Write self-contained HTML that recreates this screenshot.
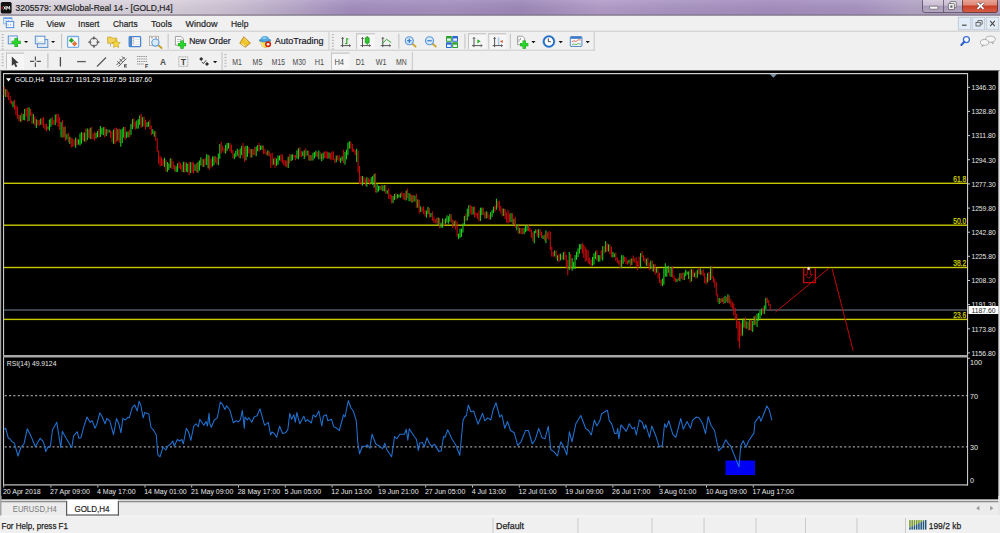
<!DOCTYPE html>
<html><head><meta charset="utf-8"><title>MT4</title>
<style>
html,body{margin:0;padding:0;width:1000px;height:533px;overflow:hidden;background:#f0f0f0;}
svg{display:block;font-family:"Liberation Sans",sans-serif;}
</style></head><body>
<svg width="1000" height="533" viewBox="0 0 1000 533">
<rect x="0" y="0" width="1000" height="533" fill="#f0f0f0"/>
<defs>
<linearGradient id="tb" x1="0" x2="1" y1="0" y2="0">
 <stop offset="0" stop-color="#dcd7e0"/>
 <stop offset="0.17" stop-color="#d9d1dd"/>
 <stop offset="0.23" stop-color="#cdc2d5"/>
 <stop offset="0.30" stop-color="#b6a4c8"/>
 <stop offset="0.35" stop-color="#a38dbf"/>
 <stop offset="0.45" stop-color="#a58fc0"/>
 <stop offset="0.52" stop-color="#9d87b9"/>
 <stop offset="0.60" stop-color="#b39cc9"/>
 <stop offset="0.67" stop-color="#aa94c4"/>
 <stop offset="0.77" stop-color="#a48dbf"/>
 <stop offset="0.86" stop-color="#a892c2"/>
 <stop offset="0.91" stop-color="#b3a3c6"/>
 <stop offset="1" stop-color="#ae9ec4"/>
</linearGradient>
<linearGradient id="tbv" x1="0" x2="0" y1="0" y2="1">
 <stop offset="0" stop-color="#ffffff" stop-opacity="0.10"/>
 <stop offset="1" stop-color="#000000" stop-opacity="0.04"/>
</linearGradient>
<linearGradient id="closeg" x1="0" x2="0" y1="0" y2="1">
 <stop offset="0" stop-color="#eab0a4"/>
 <stop offset="0.45" stop-color="#e08a78"/>
 <stop offset="0.58" stop-color="#c94028"/>
 <stop offset="1" stop-color="#d8604a"/>
</linearGradient>
<linearGradient id="capg" x1="0" x2="0" y1="0" y2="1">
 <stop offset="0" stop-color="#ddd3e2"/>
 <stop offset="0.5" stop-color="#c9bdd3"/>
 <stop offset="0.55" stop-color="#a99bb8"/>
 <stop offset="1" stop-color="#b5a8c3"/>
</linearGradient>
</defs>
<rect x="0" y="0" width="1000" height="15.5" fill="url(#tb)"/>
<rect x="0" y="0" width="1000" height="15.5" fill="url(#tbv)"/>
<rect x="0" y="14.5" width="1000" height="1.3" fill="#79717f"/>
<rect x="0.8" y="2" width="10.8" height="11.6" rx="1.6" fill="#121212"/>
<path d="M1.6 6.2 L3.4 7.8 L1.6 9.4 Z" fill="#d02020"/>
<path d="M3.6 6.2 L6 9.6 M6 6.2 L3.6 9.6 M6.6 9.7 L6.9 6.2 L8.2 8.6 L9.5 6.2 L9.8 9.7" fill="none" stroke="#f4f4f4" stroke-width="0.9"/>
<text x="15.6" y="10.9" font-size="9.6" fill="#1e1e1e" text-anchor="start" font-weight="normal" textLength="157" lengthAdjust="spacingAndGlyphs" stroke="#1e1e1e" stroke-width="0.2">3205579: XMGlobal-Real 14 - [GOLD,H4]</text>
<rect x="922.5" y="-2" width="75" height="14.5" rx="2.5" fill="url(#capg)" stroke="#5e5668" stroke-width="0.9"/>
<rect x="962.5" y="-2" width="35" height="14.5" rx="2.5" fill="url(#closeg)" stroke="#6a3a34" stroke-width="0.9"/>
<line x1="943.5" y1="0" x2="943.5" y2="12.5" stroke="#5e5668" stroke-width="0.8"/>
<rect x="929.6" y="6.2" width="8.2" height="3" rx="0.5" fill="#f8f8f8" stroke="#505050" stroke-width="0.6"/>
<rect x="950.2" y="1.6" width="6" height="6" rx="0.6" fill="#f4f4f4" stroke="#505050" stroke-width="0.7"/>
<rect x="948.4" y="3.6" width="6" height="6" rx="0.6" fill="#f4f4f4" stroke="#505050" stroke-width="0.7"/>
<rect x="950.3" y="5.5" width="2.2" height="2.2" fill="#606070"/>
<path d="M977.5 2.8 L983.5 8.8 M983.5 2.8 L977.5 8.8" stroke="#5a4040" stroke-width="3.0"/>
<path d="M977.5 2.8 L983.5 8.8 M983.5 2.8 L977.5 8.8" stroke="#ffffff" stroke-width="1.8"/>
<rect x="0" y="15.8" width="1000" height="15.2" fill="#f0f0f0"/>
<rect x="0" y="30.5" width="1000" height="1" fill="#d9d9d9"/>
<rect x="3.6" y="17.8" width="8.4" height="6" fill="#e4eefa" stroke="#8ab4e8" stroke-width="0.9"/>
<rect x="3.6" y="17.6" width="8.4" height="1.3" fill="#5a94e4"/>
<path d="M5.5 20.5 l1.5 1 M8 20 l1.2 1.2" stroke="#5a90d8" stroke-width="0.6"/>
<rect x="6.3" y="21.6" width="7.4" height="6" fill="#ffffff" stroke="#5a94e4" stroke-width="1.1"/>
<path d="M8 23.5 v2.5 M8 25 h1.2 M10.5 23.5 v2.5 M10.5 25 h1.2" stroke="#8ab0e0" stroke-width="0.6"/>
<text x="20.6" y="26.5" font-size="9.7" fill="#1e1e1e" text-anchor="start" font-weight="normal" textLength="13.4" lengthAdjust="spacingAndGlyphs" stroke="#1e1e1e" stroke-width="0.2">File</text>
<text x="46.4" y="26.5" font-size="9.7" fill="#1e1e1e" text-anchor="start" font-weight="normal" textLength="18.6" lengthAdjust="spacingAndGlyphs" stroke="#1e1e1e" stroke-width="0.2">View</text>
<text x="78" y="26.5" font-size="9.7" fill="#1e1e1e" text-anchor="start" font-weight="normal" textLength="21.4" lengthAdjust="spacingAndGlyphs" stroke="#1e1e1e" stroke-width="0.2">Insert</text>
<text x="113" y="26.5" font-size="9.7" fill="#1e1e1e" text-anchor="start" font-weight="normal" textLength="24.6" lengthAdjust="spacingAndGlyphs" stroke="#1e1e1e" stroke-width="0.2">Charts</text>
<text x="151" y="26.5" font-size="9.7" fill="#1e1e1e" text-anchor="start" font-weight="normal" textLength="21" lengthAdjust="spacingAndGlyphs" stroke="#1e1e1e" stroke-width="0.2">Tools</text>
<text x="185.6" y="26.5" font-size="9.7" fill="#1e1e1e" text-anchor="start" font-weight="normal" textLength="32.0" lengthAdjust="spacingAndGlyphs" stroke="#1e1e1e" stroke-width="0.2">Window</text>
<text x="231" y="26.5" font-size="9.7" fill="#1e1e1e" text-anchor="start" font-weight="normal" textLength="17.4" lengthAdjust="spacingAndGlyphs" stroke="#1e1e1e" stroke-width="0.2">Help</text>
<rect x="958.3" y="17.2" width="12.5" height="12.6" fill="#e2ecf7" stroke="#b4c4d4" stroke-width="0.8"/>
<rect x="972.2" y="17.2" width="12.5" height="12.6" fill="#e2ecf7" stroke="#b4c4d4" stroke-width="0.8"/>
<rect x="986.2" y="17.2" width="12.5" height="12.6" fill="#e2ecf7" stroke="#b4c4d4" stroke-width="0.8"/>
<rect x="962" y="24.6" width="4.6" height="1.2" fill="#4a4a4a"/>
<path d="M977.8 22.2 v-1.6 h4.4 v3.6 h-1.4" fill="none" stroke="#505050" stroke-width="0.8"/><rect x="976" y="22.4" width="4.2" height="3.6" fill="#e2ecf7" stroke="#505050" stroke-width="0.8"/>
<path d="M990.2 20.8 L994.8 26.2 M994.8 20.8 L990.2 26.2" stroke="#4a4a4a" stroke-width="1.1"/>
<rect x="0" y="31" width="1000" height="1" fill="#d6d6d6"/>
<rect x="0" y="32" width="1000" height="18" fill="#f0f0f0"/>
<rect x="0" y="49.7" width="595" height="1.1" fill="#d0d0d0"/>
<rect x="593.6" y="32" width="1.2" height="18" fill="#d0d0d0"/>
<rect x="328.4" y="32" width="1.1" height="18" fill="#d0d0d0"/>
<rect x="0" y="51.6" width="1000" height="18.4" fill="#f0f0f0"/>
<rect x="411.8" y="52" width="1.1" height="18" fill="#c8c8c8"/>
<rect x="1.6" y="34.0" width="2" height="1.1" fill="#b4b4b4"/>
<rect x="1.6" y="36.9" width="2" height="1.1" fill="#b4b4b4"/>
<rect x="1.6" y="39.8" width="2" height="1.1" fill="#b4b4b4"/>
<rect x="1.6" y="42.7" width="2" height="1.1" fill="#b4b4b4"/>
<rect x="1.6" y="45.6" width="2" height="1.1" fill="#b4b4b4"/>
<rect x="1.6" y="48.5" width="2" height="1.1" fill="#b4b4b4"/>
<rect x="8.3" y="36" width="9" height="7.8" fill="#f6f9fd" stroke="#5b8fd0" stroke-width="1"/>
<path d="M10 37.5 v4.5 h5 M10.5 39.5 l1 -0.8" fill="none" stroke="#9ab0c8" stroke-width="0.5"/>
<path d="M11.7 42.4 h9.0 M16.2 37.9 v9.0" stroke="#139a13" stroke-width="3.4000000000000004"/>
<path d="M12.1 42.4 h8.2 M16.2 38.3 v8.2" stroke="#2ad42a" stroke-width="2.6"/>
<path d="M24 40.9 L28.2 40.9 L26.1 43.1 Z" fill="#101010"/>
<rect x="37.4" y="39.6" width="10.4" height="7.8" fill="#e8eef6" stroke="#5b8fd0" stroke-width="1"/>
<rect x="35.3" y="36.2" width="9.6" height="7.6" fill="#f6f9fd" stroke="#5b8fd0" stroke-width="1"/>
<path d="M37 37.6 v4.6 h6" fill="none" stroke="#9ab0c8" stroke-width="0.5"/>
<path d="M51 40.9 L55.2 40.9 L53.1 43.1 Z" fill="#101010"/>
<rect x="61" y="33.7" width="1.1" height="15.0" fill="#c4c4c4"/>
<rect x="67.6" y="36.5" width="11" height="10.8" rx="0.8" fill="#fbfbfb" stroke="#78aee8" stroke-width="1.3"/>
<path d="M71.4 37.8 l2.6 2.6 l-2.6 2.6 l-2.6 -2.6 Z" fill="#22a822"/>
<path d="M74.6 41 l2.7 2.7 l-2.7 2.7 l-2.7 -2.7 Z" fill="#e8703a"/>
<circle cx="93.9" cy="42.1" r="3.9" fill="none" stroke="#6a6a6a" stroke-width="1.2"/>
<path d="M88.3 42.1 h3 M96.5 42.1 h3 M93.9 36.5 v3 M93.9 44.7 v3" stroke="#555555" stroke-width="1.3"/>
<path d="M107.6 37 h3.6 l1 1.1 h4.6 v5.2 h-9.2 Z" fill="#f3d25a" stroke="#c8a030" stroke-width="0.7"/>
<rect x="110.1" y="43.6" width="0.9" height="3" fill="#a8a8a8"/>
<path d="M116.1 39.6 l1.25 2.7 2.9 0.35 -2.15 2 0.6 2.9 -2.6 -1.45 -2.6 1.45 0.6 -2.9 -2.15 -2 2.9 -0.35 Z" fill="#f6d840" stroke="#c09a18" stroke-width="0.6"/>
<rect x="129.2" y="36.6" width="11.4" height="10" rx="0.8" fill="#ffffff" stroke="#4a86cf" stroke-width="1.3"/>
<rect x="129.4" y="36.8" width="2.6" height="9.6" fill="#4a86cf"/>
<path d="M132.5 39.5 h7.5 M132.5 42 h7.5 M132.5 44.5 h7.5" stroke="#c8d4e4" stroke-width="0.6"/>
<path d="M132.6 38.2 h1.2 M132.6 43 h1.2" stroke="#e05050" stroke-width="0.9"/><path d="M132.6 40.7 h1.2" stroke="#40a040" stroke-width="0.9"/>
<rect x="149.5" y="36.3" width="9" height="9.2" fill="#fafafa" stroke="#a8a49a" stroke-width="0.8"/>
<path d="M151 37.8 h2 M155 37.8 h2" stroke="#505050" stroke-width="0.6"/>
<path d="M158 45 l3.6 3" stroke="#c89a28" stroke-width="1.9" stroke-linecap="round"/>
<circle cx="155.4" cy="42.6" r="3.6" fill="#d8eaf8" stroke="#5a98d8" stroke-width="1.1"/>
<rect x="167.6" y="33.7" width="1.1" height="15.0" fill="#c4c4c4"/>
<path d="M175.4 36.4 h5.6 l2.3 2.3 v6.5 h-7.9 Z" fill="#fbfbfb" stroke="#8a8a8a" stroke-width="0.8"/>
<path d="M177 39.5 h4.5 M177 41.5 h4" stroke="#a0a0a0" stroke-width="0.6"/>
<path d="M177.9 44.6 h8.2 M182 40.5 v8.2" stroke="#139a13" stroke-width="3.3"/>
<path d="M178.3 44.6 h7.3999999999999995 M182 40.9 v7.3999999999999995" stroke="#2ad42a" stroke-width="2.5"/>
<text x="189.2" y="43.8" font-size="9.8" fill="#1a1a2a" text-anchor="start" font-weight="normal" textLength="41.3" lengthAdjust="spacingAndGlyphs" stroke="#1a1a2a" stroke-width="0.2">New Order</text>
<path d="M243.65 36.2 L251 42.9 L245.25 47.7 L239.2 43.2 Z" fill="#c09030"/>
<path d="M243.9 37.6 L249.6 42.9 L245.3 46.5 L240.5 43 Z" fill="#f0c62a"/>
<path d="M241.3 43.4 L245.3 46.3" stroke="#f8e6a0" stroke-width="1.1"/>
<path d="M244.2 38.6 L247.6 41.6" stroke="#f8e070" stroke-width="1"/>
<path d="M259.6 40.6 L270.6 40.6 L269.6 45.8 L265.2 47.9 L262.2 46.3 Z" fill="#f4dc4c" stroke="#c8a838" stroke-width="0.5"/>
<path d="M260.6 41.5 L263.5 46.5" stroke="#fbf0a0" stroke-width="1"/>
<ellipse cx="265" cy="40.3" rx="6.1" ry="1.9" fill="#3f94d0"/>
<ellipse cx="264.9" cy="38.4" rx="4" ry="2.5" fill="#58ace2"/>
<ellipse cx="264.4" cy="37.9" rx="2" ry="1" fill="#8cccf0"/>
<circle cx="268.1" cy="44.2" r="3" fill="#d42414"/><circle cx="268.1" cy="44.2" r="1.3" fill="#ffffff"/>
<text x="274.7" y="43.8" font-size="9.8" fill="#1a1a2a" text-anchor="start" font-weight="normal" textLength="48.8" lengthAdjust="spacingAndGlyphs" stroke="#1a1a2a" stroke-width="0.2">AutoTrading</text>
<rect x="331.8" y="34.0" width="2" height="1.1" fill="#b4b4b4"/>
<rect x="331.8" y="36.9" width="2" height="1.1" fill="#b4b4b4"/>
<rect x="331.8" y="39.8" width="2" height="1.1" fill="#b4b4b4"/>
<rect x="331.8" y="42.7" width="2" height="1.1" fill="#b4b4b4"/>
<rect x="331.8" y="45.6" width="2" height="1.1" fill="#b4b4b4"/>
<rect x="331.8" y="48.5" width="2" height="1.1" fill="#b4b4b4"/>
<path d="M342.6 37.4 V47.1 M340.6 45.6 H350.5" stroke="#555555" stroke-width="1"/>
<path d="M341.40000000000003 38.9 L342.6 37.4 L343.8 38.9 M349.0 44.4 L350.5 45.6 L349.0 46.800000000000004" fill="none" stroke="#555555" stroke-width="0.8"/>
<path d="M346.8 38 v6.2 M346.8 39 h1.6 M346.8 43.5 h-1.6" stroke="#22a822" stroke-width="1.1"/>
<rect x="356.1" y="33.3" width="18.799999999999955" height="15.700000000000003" fill="#f6f6f6"/>
<rect x="356.1" y="33.3" width="18.799999999999955" height="1" fill="#b8b8b8"/>
<rect x="356.1" y="33.3" width="1" height="15.700000000000003" fill="#c4c4c4"/>
<path d="M362.5 37.4 V47.1 M360.5 45.6 H370.6" stroke="#555555" stroke-width="1"/>
<path d="M361.3 38.9 L362.5 37.4 L363.7 38.9 M369.1 44.4 L370.6 45.6 L369.1 46.800000000000004" fill="none" stroke="#555555" stroke-width="0.8"/>
<path d="M367.2 36 v9" stroke="#148814" stroke-width="0.8"/>
<rect x="365.2" y="37.4" width="4" height="5.8" rx="0.8" fill="#2ac82a" stroke="#148814" stroke-width="0.6"/>
<path d="M382.8 37.4 V47.1 M380.8 45.6 H390.8" stroke="#555555" stroke-width="1"/>
<path d="M381.6 38.9 L382.8 37.4 L384.0 38.9 M389.3 44.4 L390.8 45.6 L389.3 46.800000000000004" fill="none" stroke="#555555" stroke-width="0.8"/>
<path d="M382.2 43.6 L386.6 39.3 L391.2 42.6" fill="none" stroke="#32a832" stroke-width="1"/>
<rect x="398.3" y="33.7" width="1.1" height="15.0" fill="#c4c4c4"/>
<path d="M412.1 43.6 l3.4 3" stroke="#d0a838" stroke-width="2" stroke-linecap="round"/>
<circle cx="409.3" cy="40.75" r="4" fill="#d4e8fa" stroke="#5a98dc" stroke-width="1.2"/>
<path d="M407.1 40.75 h4.4" stroke="#3a78c8" stroke-width="1.2"/>
<path d="M409.3 38.55 v4.4" stroke="#3a78c8" stroke-width="1.2"/>
<path d="M432.3 43.6 l3.4 3" stroke="#d0a838" stroke-width="2" stroke-linecap="round"/>
<circle cx="429.5" cy="40.75" r="4" fill="#d4e8fa" stroke="#5a98dc" stroke-width="1.2"/>
<path d="M427.3 40.75 h4.4" stroke="#3a78c8" stroke-width="1.2"/>
<rect x="446" y="36" width="5.8" height="5.8" rx="0.4" fill="#2ca02c"/>
<rect x="447" y="38.4" width="3.8" height="2.4" fill="#e8f0f8"/>
<rect x="452.2" y="36" width="5.8" height="5.8" rx="0.4" fill="#2a68d0"/>
<rect x="453.2" y="38.4" width="3.8" height="2.4" fill="#e8f0f8"/>
<rect x="446" y="42.2" width="5.8" height="5.8" rx="0.4" fill="#2a68d0"/>
<rect x="447" y="44.6" width="3.8" height="2.4" fill="#e8f0f8"/>
<rect x="452.2" y="42.2" width="5.8" height="5.8" rx="0.4" fill="#2ca02c"/>
<rect x="453.2" y="44.6" width="3.8" height="2.4" fill="#e8f0f8"/>
<rect x="464.4" y="33.7" width="1.1" height="15.0" fill="#c4c4c4"/>
<rect x="468" y="33.3" width="18" height="15.700000000000003" fill="#f6f6f6"/>
<rect x="468" y="33.3" width="18" height="1" fill="#b8b8b8"/>
<rect x="468" y="33.3" width="1" height="15.700000000000003" fill="#c4c4c4"/>
<path d="M474 37.4 V47.1 M472 45.6 H482.2" stroke="#555555" stroke-width="1"/>
<path d="M472.8 38.9 L474 37.4 L475.2 38.9 M480.7 44.4 L482.2 45.6 L480.7 46.800000000000004" fill="none" stroke="#555555" stroke-width="0.8"/>
<path d="M477.4 39.2 L480.6 41.3 L477.4 43.4 Z" fill="#2ab02a"/>
<rect x="488.3" y="33.3" width="18.0" height="15.700000000000003" fill="#f6f6f6"/>
<rect x="488.3" y="33.3" width="18.0" height="1" fill="#b8b8b8"/>
<rect x="488.3" y="33.3" width="1" height="15.700000000000003" fill="#c4c4c4"/>
<path d="M494.6 37.4 V47.1 M492.6 45.6 H502.6" stroke="#555555" stroke-width="1"/>
<path d="M493.40000000000003 38.9 L494.6 37.4 L495.8 38.9 M501.1 44.4 L502.6 45.6 L501.1 46.800000000000004" fill="none" stroke="#555555" stroke-width="0.8"/>
<rect x="497.8" y="37.4" width="1.6" height="7.6" fill="#a8cce8"/>
<path d="M499.8 41.4 L502.8 39.9 L502.8 42.9 Z" fill="#e0602a"/>
<rect x="509.8" y="33.7" width="1.1" height="15.0" fill="#c4c4c4"/>
<path d="M517.6 36.2 h5 l2 2 v6.5 h-7 Z" fill="#fbfbfb" stroke="#8a8a8a" stroke-width="0.8"/>
<path d="M519 39 v3 M520.5 38 v2" stroke="#707070" stroke-width="0.6"/>
<path d="M520.1 44.6 h8.2 M524.2 40.5 v8.2" stroke="#139a13" stroke-width="3.3"/>
<path d="M520.5 44.6 h7.3999999999999995 M524.2 40.9 v7.3999999999999995" stroke="#2ad42a" stroke-width="2.5"/>
<path d="M531.3 41 L535.5 41 L533.4 43.2 Z" fill="#101010"/>
<circle cx="548.9" cy="41.5" r="5.2" fill="#ffffff" stroke="#1f6ac0" stroke-width="1.8"/>
<circle cx="548.9" cy="41.5" r="6.1" fill="none" stroke="#4a90d8" stroke-width="0.5"/>
<path d="M548.3 38.3 v3.4 h2.6" fill="none" stroke="#202020" stroke-width="0.8"/>
<path d="M558.6 41 L562.8000000000001 41 L560.7 43.2 Z" fill="#101010"/>
<rect x="570.3" y="36.6" width="11.6" height="9.8" rx="0.6" fill="#ffffff" stroke="#4a80c8" stroke-width="1"/>
<rect x="570.8" y="37" width="10.6" height="1.8" fill="#3a78c8"/>
<path d="M571.8 41.6 l2.2 -0.8 l2 0.6 l2.3 -1.6 l2.5 0.3" fill="none" stroke="#c8502a" stroke-width="0.8"/>
<rect x="570.8" y="42.6" width="10.6" height="0.6" fill="#c8d8ea"/>
<path d="M571.8 45 l2.2 -1 l2 0.8 l2.3 -1.3 l2.5 0.9" fill="none" stroke="#40a840" stroke-width="0.8"/>
<path d="M585.6 41 L589.8000000000001 41 L587.7 43.2 Z" fill="#101010"/>
<circle cx="966.4" cy="39.6" r="3.0" fill="#ffffff" stroke="#3a6fd8" stroke-width="1.3"/>
<path d="M964.3 41.8 l-3 3.2" stroke="#2a5fc8" stroke-width="2" stroke-linecap="round"/>
<ellipse cx="990.4" cy="39.2" rx="5" ry="3.1" fill="#f6f6f8" stroke="#a0a0a0" stroke-width="0.8"/>
<path d="M991.5 41.8 l1.5 2.2 l0 -2.4" fill="#f6f6f8" stroke="#808080" stroke-width="0.6"/>
<ellipse cx="984.5" cy="42.4" rx="4.2" ry="2.9" fill="#f6f6f8" stroke="#a0a0a0" stroke-width="0.8"/>
<path d="M982.5 45 l-0.6 1.6 l1.8 -1.4" fill="#f6f6f8" stroke="#808080" stroke-width="0.6"/>
<rect x="1.6" y="53.5" width="2" height="1.1" fill="#b4b4b4"/>
<rect x="1.6" y="56.4" width="2" height="1.1" fill="#b4b4b4"/>
<rect x="1.6" y="59.3" width="2" height="1.1" fill="#b4b4b4"/>
<rect x="1.6" y="62.2" width="2" height="1.1" fill="#b4b4b4"/>
<rect x="1.6" y="65.1" width="2" height="1.1" fill="#b4b4b4"/>
<rect x="6" y="52.6" width="18" height="16.15" fill="#f6f6f6"/>
<rect x="6" y="52.6" width="18" height="1" fill="#b8b8b8"/>
<rect x="6" y="52.6" width="1" height="16.15" fill="#c4c4c4"/>
<path d="M11.8 56.4 L11.8 66 L14 64 L15.6 67.3 L17.3 66.5 L15.7 63.3 L18.6 63 Z" fill="#3c3c3c"/>
<path d="M30 61.4 h4.2 M36.6 61.4 h4.3 M35.4 56.4 v4 M35.4 62.5 v4.4" stroke="#505050" stroke-width="1.2"/>
<rect x="47.2" y="53.4" width="1.4" height="15" fill="#c8c8c8"/>
<path d="M60.4 57.1 v9.4" stroke="#4a4a4a" stroke-width="1.3"/>
<path d="M77.1 61.6 h8.7" stroke="#5a5a5a" stroke-width="1.3"/>
<path d="M97 66.5 L106 57.5" stroke="#505050" stroke-width="1.1"/>
<path d="M116.5 65 L124.5 57 M118.3 66.6 L126.3 58.6 M117.3 61.2 l3 3 M119.5 58.8 l3 3 M122 56.4 l3 3" stroke="#4a4a4a" stroke-width="0.9"/>
<path d="M124.3 64.6 h2.6 M124.3 65.8 h2.2 M124.3 67 h2.6 M124.5 64.6 v2.6" stroke="#303030" stroke-width="0.7"/>
<path d="M137 56.5 h10" stroke="#7a7a7a" stroke-width="0.8" stroke-dasharray="1.2 0.6"/>
<path d="M137 59 h10" stroke="#7a7a7a" stroke-width="0.8" stroke-dasharray="1.2 0.6"/>
<path d="M137 61.5 h10" stroke="#7a7a7a" stroke-width="0.8" stroke-dasharray="1.2 0.6"/>
<path d="M137 64 h7" stroke="#7a7a7a" stroke-width="0.8" stroke-dasharray="1.2 0.6"/>
<text x="145" y="68" font-size="5.4" fill="#303030" text-anchor="start" font-weight="bold" >F</text>
<text x="160" y="65.2" font-size="9" fill="#4e4e4e" text-anchor="start" font-weight="bold" textLength="6" lengthAdjust="spacingAndGlyphs" >A</text>
<rect x="178.8" y="56.8" width="9" height="9.5" fill="none" stroke="#808080" stroke-width="0.7" stroke-dasharray="0.9 0.7"/>
<text x="180.8" y="65" font-size="8.2" fill="#404040" text-anchor="start" font-weight="bold" textLength="5.2" lengthAdjust="spacingAndGlyphs" >T</text>
<path d="M199.2 59 l2 -2 l2 2 l-2 2 Z M205 64 l2 -2 l2 2 l-2 2 Z" fill="#303030"/>
<path d="M201.8 61.8 l1.6 1.8 l2.6 -3.3" fill="none" stroke="#404040" stroke-width="1"/>
<path d="M213 61 L217.2 61 L215.1 63.2 Z" fill="#101010"/>
<rect x="221.5" y="52" width="1.1" height="18" fill="#c4c4c4"/>
<rect x="224.5" y="54.0" width="2" height="1.1" fill="#b4b4b4"/>
<rect x="224.5" y="56.9" width="2" height="1.1" fill="#b4b4b4"/>
<rect x="224.5" y="59.8" width="2" height="1.1" fill="#b4b4b4"/>
<rect x="224.5" y="62.7" width="2" height="1.1" fill="#b4b4b4"/>
<rect x="224.5" y="65.6" width="2" height="1.1" fill="#b4b4b4"/>
<text x="232.2" y="64.7" font-size="8.3" fill="#4a4a4a" text-anchor="start" font-weight="normal" textLength="9.7" lengthAdjust="spacingAndGlyphs" >M1</text>
<text x="252.6" y="64.7" font-size="8.3" fill="#4a4a4a" text-anchor="start" font-weight="normal" textLength="9.7" lengthAdjust="spacingAndGlyphs" >M5</text>
<text x="271.8" y="64.7" font-size="8.3" fill="#4a4a4a" text-anchor="start" font-weight="normal" textLength="13.1" lengthAdjust="spacingAndGlyphs" >M15</text>
<text x="292.5" y="64.7" font-size="8.3" fill="#4a4a4a" text-anchor="start" font-weight="normal" textLength="13.3" lengthAdjust="spacingAndGlyphs" >M30</text>
<text x="314.7" y="64.7" font-size="8.3" fill="#4a4a4a" text-anchor="start" font-weight="normal" textLength="9.3" lengthAdjust="spacingAndGlyphs" >H1</text>
<rect x="331" y="52.6" width="18.399999999999977" height="16.6" fill="#f6f6f6"/>
<rect x="331" y="52.6" width="18.399999999999977" height="1" fill="#b8b8b8"/>
<rect x="331" y="52.6" width="1" height="16.6" fill="#c4c4c4"/>
<text x="334.4" y="64.7" font-size="8.3" fill="#4a4a4a" text-anchor="start" font-weight="normal" textLength="9.6" lengthAdjust="spacingAndGlyphs" >H4</text>
<text x="355.8" y="64.7" font-size="8.3" fill="#4a4a4a" text-anchor="start" font-weight="normal" textLength="8.9" lengthAdjust="spacingAndGlyphs" >D1</text>
<text x="375.8" y="64.7" font-size="8.3" fill="#4a4a4a" text-anchor="start" font-weight="normal" textLength="10.8" lengthAdjust="spacingAndGlyphs" >W1</text>
<text x="395.9" y="64.7" font-size="8.3" fill="#4a4a4a" text-anchor="start" font-weight="normal" textLength="10.8" lengthAdjust="spacingAndGlyphs" >MN</text>
<rect x="0" y="70" width="1000" height="1.6" fill="#6a6a6a"/>
<rect x="0" y="71" width="998.6" height="428.7" fill="#000000"/>
<rect x="0" y="70.5" width="1.2" height="430" fill="#a0a0a0"/>
<rect x="998.6" y="70.5" width="1.4" height="430" fill="#dcdcdc"/>
<rect x="3" y="73" width="965" height="1.2" fill="#d0d0d0"/>
<rect x="3" y="73" width="1.1" height="412.5" fill="#c8c8c8"/>
<rect x="967" y="73" width="1.1" height="412.5" fill="#c8c8c8"/>
<rect x="3" y="355" width="965" height="2.5" fill="#a8a8a8"/>
<rect x="3" y="484.3" width="965" height="1.2" fill="#c8c8c8"/>
<rect x="968" y="86.8" width="2" height="1" fill="#c8c8c8"/>
<text x="971.4" y="90.1" font-size="7.2" fill="#e8e8e8" text-anchor="start" font-weight="normal" textLength="24.3" lengthAdjust="spacingAndGlyphs" >1346.30</text>
<rect x="968" y="110.9" width="2" height="1" fill="#c8c8c8"/>
<text x="971.4" y="114.2" font-size="7.2" fill="#e8e8e8" text-anchor="start" font-weight="normal" textLength="24.3" lengthAdjust="spacingAndGlyphs" >1328.80</text>
<rect x="968" y="135.1" width="2" height="1" fill="#c8c8c8"/>
<text x="971.4" y="138.4" font-size="7.2" fill="#e8e8e8" text-anchor="start" font-weight="normal" textLength="24.3" lengthAdjust="spacingAndGlyphs" >1311.80</text>
<rect x="968" y="159.2" width="2" height="1" fill="#c8c8c8"/>
<text x="971.4" y="162.6" font-size="7.2" fill="#e8e8e8" text-anchor="start" font-weight="normal" textLength="24.3" lengthAdjust="spacingAndGlyphs" >1294.30</text>
<rect x="968" y="183.4" width="2" height="1" fill="#c8c8c8"/>
<text x="971.4" y="186.7" font-size="7.2" fill="#e8e8e8" text-anchor="start" font-weight="normal" textLength="24.3" lengthAdjust="spacingAndGlyphs" >1277.30</text>
<rect x="968" y="207.6" width="2" height="1" fill="#c8c8c8"/>
<text x="971.4" y="210.9" font-size="7.2" fill="#e8e8e8" text-anchor="start" font-weight="normal" textLength="24.3" lengthAdjust="spacingAndGlyphs" >1259.80</text>
<rect x="968" y="231.7" width="2" height="1" fill="#c8c8c8"/>
<text x="971.4" y="235.0" font-size="7.2" fill="#e8e8e8" text-anchor="start" font-weight="normal" textLength="24.3" lengthAdjust="spacingAndGlyphs" >1242.80</text>
<rect x="968" y="255.8" width="2" height="1" fill="#c8c8c8"/>
<text x="971.4" y="259.1" font-size="7.2" fill="#e8e8e8" text-anchor="start" font-weight="normal" textLength="24.3" lengthAdjust="spacingAndGlyphs" >1225.80</text>
<rect x="968" y="280.0" width="2" height="1" fill="#c8c8c8"/>
<text x="971.4" y="283.3" font-size="7.2" fill="#e8e8e8" text-anchor="start" font-weight="normal" textLength="24.3" lengthAdjust="spacingAndGlyphs" >1208.30</text>
<rect x="968" y="304.1" width="2" height="1" fill="#c8c8c8"/>
<text x="971.4" y="307.4" font-size="7.2" fill="#e8e8e8" text-anchor="start" font-weight="normal" textLength="24.3" lengthAdjust="spacingAndGlyphs" >1191.30</text>
<rect x="968" y="328.3" width="2" height="1" fill="#c8c8c8"/>
<text x="971.4" y="331.6" font-size="7.2" fill="#e8e8e8" text-anchor="start" font-weight="normal" textLength="24.3" lengthAdjust="spacingAndGlyphs" >1173.80</text>
<rect x="968" y="352.4" width="2" height="1" fill="#c8c8c8"/>
<text x="971.4" y="355.8" font-size="7.2" fill="#e8e8e8" text-anchor="start" font-weight="normal" textLength="24.3" lengthAdjust="spacingAndGlyphs" >1156.80</text>
<rect x="4" y="182.6" width="963" height="1.4" fill="#c8c800"/>
<text x="966.2" y="181.8" font-size="8.2" fill="#d8d800" text-anchor="end" font-weight="normal" textLength="13" lengthAdjust="spacingAndGlyphs" stroke="#c8c800" stroke-width="0.25">61.8</text>
<rect x="4" y="224.5" width="963" height="1.4" fill="#c8c800"/>
<text x="966.2" y="223.7" font-size="8.2" fill="#d8d800" text-anchor="end" font-weight="normal" textLength="13" lengthAdjust="spacingAndGlyphs" stroke="#c8c800" stroke-width="0.25">50.0</text>
<rect x="4" y="266.8" width="963" height="1.4" fill="#c8c800"/>
<text x="966.2" y="266.0" font-size="8.2" fill="#d8d800" text-anchor="end" font-weight="normal" textLength="13" lengthAdjust="spacingAndGlyphs" stroke="#c8c800" stroke-width="0.25">38.2</text>
<rect x="4" y="318.7" width="963" height="1.4" fill="#c8c800"/>
<text x="966.2" y="317.9" font-size="8.2" fill="#d8d800" text-anchor="end" font-weight="normal" textLength="13" lengthAdjust="spacingAndGlyphs" stroke="#c8c800" stroke-width="0.25">23.6</text>
<rect x="4" y="309.1" width="963" height="1.9" fill="#3e4650"/>
<rect x="968.5" y="306" width="30" height="8" fill="#ffffff"/>
<text x="971.5" y="313" font-size="7.2" fill="#202020" text-anchor="start" font-weight="normal" textLength="24" lengthAdjust="spacingAndGlyphs" >1187.60</text>
<path d="M6 78.3 h5 l-2.5 3.2 Z" fill="#ffffff"/>
<text x="14.7" y="81.9" font-size="7.9" fill="#ffffff" text-anchor="start" font-weight="normal" textLength="29.3" lengthAdjust="spacingAndGlyphs" >GOLD,H4</text>
<text x="49.3" y="81.9" font-size="7.9" fill="#ffffff" text-anchor="start" font-weight="normal" textLength="24.0" lengthAdjust="spacingAndGlyphs" >1191.27</text>
<text x="75.5" y="81.9" font-size="7.9" fill="#ffffff" text-anchor="start" font-weight="normal" textLength="24.5" lengthAdjust="spacingAndGlyphs" >1191.29</text>
<text x="102" y="81.9" font-size="7.9" fill="#ffffff" text-anchor="start" font-weight="normal" textLength="24.4" lengthAdjust="spacingAndGlyphs" >1187.59</text>
<text x="128.5" y="81.9" font-size="7.9" fill="#ffffff" text-anchor="start" font-weight="normal" textLength="23.5" lengthAdjust="spacingAndGlyphs" >1187.60</text>
<path d="M769.8 74 h7.2 l-3.6 3.8 Z" fill="#7d8fa6"/>
<rect x="3.77" y="87.00" width="1.05" height="8.50" fill="#c80c0c"/>
<rect x="5.23" y="89.00" width="1.05" height="8.00" fill="#1fd01f"/>
<rect x="6.69" y="89.73" width="1.05" height="7.50" fill="#c80c0c"/>
<rect x="8.14" y="91.86" width="1.05" height="8.34" fill="#c80c0c"/>
<rect x="9.60" y="95.72" width="1.05" height="7.72" fill="#c80c0c"/>
<rect x="11.05" y="100.43" width="1.05" height="4.13" fill="#c80c0c"/>
<rect x="12.51" y="101.20" width="1.05" height="6.05" fill="#1fd01f"/>
<rect x="13.97" y="99.71" width="1.05" height="9.90" fill="#c80c0c"/>
<rect x="15.42" y="105.08" width="1.05" height="10.04" fill="#c80c0c"/>
<rect x="16.88" y="106.60" width="1.05" height="12.09" fill="#c80c0c"/>
<rect x="18.33" y="114.80" width="1.05" height="6.39" fill="#c80c0c"/>
<rect x="19.79" y="115.23" width="1.05" height="6.44" fill="#1fd01f"/>
<rect x="21.25" y="112.76" width="1.05" height="9.40" fill="#c80c0c"/>
<rect x="22.70" y="113.94" width="1.05" height="6.14" fill="#1fd01f"/>
<rect x="24.16" y="108.91" width="1.05" height="11.44" fill="#1fd01f"/>
<rect x="25.61" y="108.07" width="1.05" height="8.55" fill="#c80c0c"/>
<rect x="27.07" y="107.63" width="1.05" height="14.11" fill="#c80c0c"/>
<rect x="28.53" y="107.30" width="1.05" height="13.71" fill="#1fd01f"/>
<rect x="29.98" y="108.99" width="1.05" height="6.83" fill="#c80c0c"/>
<rect x="31.44" y="112.52" width="1.05" height="11.39" fill="#c80c0c"/>
<rect x="32.89" y="114.18" width="1.05" height="9.43" fill="#1fd01f"/>
<rect x="34.35" y="116.51" width="1.05" height="8.99" fill="#c80c0c"/>
<rect x="35.81" y="119.26" width="1.05" height="8.60" fill="#1fd01f"/>
<rect x="37.26" y="119.96" width="1.05" height="5.49" fill="#c80c0c"/>
<rect x="38.72" y="119.77" width="1.05" height="6.15" fill="#c80c0c"/>
<rect x="40.18" y="118.48" width="1.05" height="6.21" fill="#1fd01f"/>
<rect x="41.63" y="117.92" width="1.05" height="7.23" fill="#c80c0c"/>
<rect x="43.09" y="116.86" width="1.05" height="10.98" fill="#c80c0c"/>
<rect x="44.54" y="123.86" width="1.05" height="6.28" fill="#c80c0c"/>
<rect x="46.00" y="123.73" width="1.05" height="7.56" fill="#c80c0c"/>
<rect x="47.46" y="126.64" width="1.05" height="2.50" fill="#1fd01f"/>
<rect x="48.91" y="119.57" width="1.05" height="11.27" fill="#1fd01f"/>
<rect x="50.37" y="118.15" width="1.05" height="8.73" fill="#1fd01f"/>
<rect x="51.82" y="116.89" width="1.05" height="8.26" fill="#c80c0c"/>
<rect x="53.28" y="119.90" width="1.05" height="4.88" fill="#c80c0c"/>
<rect x="54.74" y="114.45" width="1.05" height="10.64" fill="#1fd01f"/>
<rect x="56.19" y="113.95" width="1.05" height="8.70" fill="#c80c0c"/>
<rect x="57.65" y="113.75" width="1.05" height="13.01" fill="#c80c0c"/>
<rect x="59.10" y="117.24" width="1.05" height="12.71" fill="#c80c0c"/>
<rect x="60.56" y="121.91" width="1.05" height="15.43" fill="#1fd01f"/>
<rect x="62.02" y="120.07" width="1.05" height="17.67" fill="#c80c0c"/>
<rect x="63.47" y="126.79" width="1.05" height="10.70" fill="#1fd01f"/>
<rect x="64.93" y="126.37" width="1.05" height="14.50" fill="#c80c0c"/>
<rect x="66.38" y="133.96" width="1.05" height="5.53" fill="#1fd01f"/>
<rect x="67.84" y="132.81" width="1.05" height="9.60" fill="#c80c0c"/>
<rect x="69.30" y="136.62" width="1.05" height="7.39" fill="#1fd01f"/>
<rect x="70.75" y="137.78" width="1.05" height="9.70" fill="#c80c0c"/>
<rect x="72.21" y="138.35" width="1.05" height="8.39" fill="#c80c0c"/>
<rect x="73.66" y="139.62" width="1.05" height="6.59" fill="#c80c0c"/>
<rect x="75.12" y="137.61" width="1.05" height="10.22" fill="#1fd01f"/>
<rect x="76.58" y="138.59" width="1.05" height="6.70" fill="#c80c0c"/>
<rect x="78.03" y="139.44" width="1.05" height="5.22" fill="#1fd01f"/>
<rect x="79.49" y="133.55" width="1.05" height="11.86" fill="#1fd01f"/>
<rect x="80.94" y="131.98" width="1.05" height="11.67" fill="#1fd01f"/>
<rect x="82.40" y="132.58" width="1.05" height="8.01" fill="#c80c0c"/>
<rect x="83.86" y="132.56" width="1.05" height="9.14" fill="#1fd01f"/>
<rect x="85.31" y="128.45" width="1.05" height="13.93" fill="#c80c0c"/>
<rect x="86.77" y="128.42" width="1.05" height="11.79" fill="#1fd01f"/>
<rect x="88.22" y="129.24" width="1.05" height="8.70" fill="#c80c0c"/>
<rect x="89.68" y="127.74" width="1.05" height="11.27" fill="#1fd01f"/>
<rect x="91.14" y="126.96" width="1.05" height="12.33" fill="#c80c0c"/>
<rect x="92.59" y="133.51" width="1.05" height="5.69" fill="#c80c0c"/>
<rect x="94.05" y="131.68" width="1.05" height="8.92" fill="#c80c0c"/>
<rect x="95.50" y="132.91" width="1.05" height="5.57" fill="#1fd01f"/>
<rect x="96.96" y="131.12" width="1.05" height="6.12" fill="#1fd01f"/>
<rect x="98.42" y="129.03" width="1.05" height="8.40" fill="#c80c0c"/>
<rect x="99.87" y="126.00" width="1.05" height="10.94" fill="#1fd01f"/>
<rect x="101.33" y="128.15" width="1.05" height="6.26" fill="#1fd01f"/>
<rect x="102.78" y="127.14" width="1.05" height="8.10" fill="#1fd01f"/>
<rect x="104.24" y="127.00" width="1.05" height="10.47" fill="#c80c0c"/>
<rect x="105.70" y="128.94" width="1.05" height="7.04" fill="#1fd01f"/>
<rect x="107.15" y="129.55" width="1.05" height="4.42" fill="#c80c0c"/>
<rect x="108.61" y="129.62" width="1.05" height="2.97" fill="#1fd01f"/>
<rect x="110.06" y="130.42" width="1.05" height="7.51" fill="#c80c0c"/>
<rect x="111.52" y="131.22" width="1.05" height="11.01" fill="#c80c0c"/>
<rect x="112.98" y="129.70" width="1.05" height="14.10" fill="#1fd01f"/>
<rect x="114.43" y="127.76" width="1.05" height="16.53" fill="#c80c0c"/>
<rect x="115.89" y="127.70" width="1.05" height="14.25" fill="#c80c0c"/>
<rect x="117.34" y="129.13" width="1.05" height="11.64" fill="#1fd01f"/>
<rect x="118.80" y="128.58" width="1.05" height="14.25" fill="#c80c0c"/>
<rect x="120.26" y="129.55" width="1.05" height="17.16" fill="#1fd01f"/>
<rect x="121.71" y="128.46" width="1.05" height="14.72" fill="#1fd01f"/>
<rect x="123.17" y="126.90" width="1.05" height="10.73" fill="#1fd01f"/>
<rect x="124.62" y="126.83" width="1.05" height="13.03" fill="#c80c0c"/>
<rect x="126.08" y="131.68" width="1.05" height="6.38" fill="#1fd01f"/>
<rect x="127.54" y="131.34" width="1.05" height="5.82" fill="#1fd01f"/>
<rect x="128.99" y="129.88" width="1.05" height="7.38" fill="#c80c0c"/>
<rect x="130.45" y="123.84" width="1.05" height="11.36" fill="#1fd01f"/>
<rect x="131.90" y="119.06" width="1.05" height="10.00" fill="#1fd01f"/>
<rect x="133.36" y="118.25" width="1.05" height="9.08" fill="#c80c0c"/>
<rect x="134.82" y="121.50" width="1.05" height="8.10" fill="#c80c0c"/>
<rect x="136.27" y="120.52" width="1.05" height="8.07" fill="#1fd01f"/>
<rect x="137.73" y="119.12" width="1.05" height="9.50" fill="#1fd01f"/>
<rect x="139.18" y="115.43" width="1.05" height="9.47" fill="#1fd01f"/>
<rect x="140.64" y="113.90" width="1.05" height="13.86" fill="#c80c0c"/>
<rect x="142.10" y="117.05" width="1.05" height="9.65" fill="#1fd01f"/>
<rect x="143.55" y="116.62" width="1.05" height="9.78" fill="#c80c0c"/>
<rect x="145.01" y="120.04" width="1.05" height="9.54" fill="#c80c0c"/>
<rect x="146.46" y="122.19" width="1.05" height="4.97" fill="#1fd01f"/>
<rect x="147.92" y="121.57" width="1.05" height="5.15" fill="#1fd01f"/>
<rect x="149.38" y="119.60" width="1.05" height="9.49" fill="#c80c0c"/>
<rect x="150.83" y="125.61" width="1.05" height="9.57" fill="#c80c0c"/>
<rect x="152.29" y="129.19" width="1.05" height="4.89" fill="#1fd01f"/>
<rect x="153.74" y="131.20" width="1.05" height="5.48" fill="#1fd01f"/>
<rect x="155.20" y="131.22" width="1.05" height="9.61" fill="#c80c0c"/>
<rect x="156.65" y="138.26" width="1.05" height="13.60" fill="#c80c0c"/>
<rect x="158.11" y="150.43" width="1.05" height="13.33" fill="#c80c0c"/>
<rect x="159.57" y="155.77" width="1.05" height="10.72" fill="#c80c0c"/>
<rect x="161.02" y="157.37" width="1.05" height="8.50" fill="#c80c0c"/>
<rect x="162.48" y="159.30" width="1.05" height="6.35" fill="#c80c0c"/>
<rect x="163.93" y="157.74" width="1.05" height="9.14" fill="#1fd01f"/>
<rect x="165.39" y="159.81" width="1.05" height="11.64" fill="#c80c0c"/>
<rect x="166.85" y="162.01" width="1.05" height="10.01" fill="#1fd01f"/>
<rect x="168.30" y="163.44" width="1.05" height="6.53" fill="#1fd01f"/>
<rect x="169.76" y="158.29" width="1.05" height="9.64" fill="#1fd01f"/>
<rect x="171.21" y="158.65" width="1.05" height="10.04" fill="#c80c0c"/>
<rect x="172.67" y="161.18" width="1.05" height="8.02" fill="#c80c0c"/>
<rect x="174.13" y="164.91" width="1.05" height="6.48" fill="#c80c0c"/>
<rect x="175.58" y="166.16" width="1.05" height="5.89" fill="#1fd01f"/>
<rect x="177.04" y="163.36" width="1.05" height="8.48" fill="#1fd01f"/>
<rect x="178.49" y="161.64" width="1.05" height="6.83" fill="#c80c0c"/>
<rect x="179.95" y="162.82" width="1.05" height="6.70" fill="#c80c0c"/>
<rect x="181.41" y="164.81" width="1.05" height="7.22" fill="#c80c0c"/>
<rect x="182.86" y="161.78" width="1.05" height="10.38" fill="#1fd01f"/>
<rect x="184.32" y="162.00" width="1.05" height="10.70" fill="#c80c0c"/>
<rect x="185.77" y="162.71" width="1.05" height="9.12" fill="#1fd01f"/>
<rect x="187.23" y="163.78" width="1.05" height="8.52" fill="#1fd01f"/>
<rect x="188.69" y="162.16" width="1.05" height="13.06" fill="#c80c0c"/>
<rect x="190.14" y="162.17" width="1.05" height="10.85" fill="#1fd01f"/>
<rect x="191.60" y="161.86" width="1.05" height="10.80" fill="#c80c0c"/>
<rect x="193.05" y="162.42" width="1.05" height="11.10" fill="#c80c0c"/>
<rect x="194.51" y="164.28" width="1.05" height="6.70" fill="#1fd01f"/>
<rect x="195.97" y="163.36" width="1.05" height="9.19" fill="#c80c0c"/>
<rect x="197.42" y="162.15" width="1.05" height="10.49" fill="#1fd01f"/>
<rect x="198.88" y="160.44" width="1.05" height="10.07" fill="#1fd01f"/>
<rect x="200.33" y="157.29" width="1.05" height="8.12" fill="#1fd01f"/>
<rect x="201.79" y="158.96" width="1.05" height="7.94" fill="#c80c0c"/>
<rect x="203.25" y="159.27" width="1.05" height="7.70" fill="#1fd01f"/>
<rect x="204.70" y="157.95" width="1.05" height="6.90" fill="#c80c0c"/>
<rect x="206.16" y="154.15" width="1.05" height="10.99" fill="#1fd01f"/>
<rect x="207.61" y="154.85" width="1.05" height="13.59" fill="#1fd01f"/>
<rect x="209.07" y="155.49" width="1.05" height="14.11" fill="#c80c0c"/>
<rect x="210.53" y="158.88" width="1.05" height="8.84" fill="#c80c0c"/>
<rect x="211.98" y="156.55" width="1.05" height="9.95" fill="#1fd01f"/>
<rect x="213.44" y="156.36" width="1.05" height="8.85" fill="#1fd01f"/>
<rect x="214.89" y="156.06" width="1.05" height="6.61" fill="#c80c0c"/>
<rect x="216.35" y="157.24" width="1.05" height="7.33" fill="#c80c0c"/>
<rect x="217.81" y="153.54" width="1.05" height="11.70" fill="#1fd01f"/>
<rect x="219.26" y="143.97" width="1.05" height="14.86" fill="#1fd01f"/>
<rect x="220.72" y="141.75" width="1.05" height="11.77" fill="#c80c0c"/>
<rect x="222.17" y="145.44" width="1.05" height="5.81" fill="#c80c0c"/>
<rect x="223.63" y="148.00" width="1.05" height="4.87" fill="#c80c0c"/>
<rect x="225.09" y="144.69" width="1.05" height="8.97" fill="#1fd01f"/>
<rect x="226.54" y="143.10" width="1.05" height="8.04" fill="#1fd01f"/>
<rect x="228.00" y="142.83" width="1.05" height="5.76" fill="#1fd01f"/>
<rect x="229.45" y="143.15" width="1.05" height="8.36" fill="#c80c0c"/>
<rect x="230.91" y="144.54" width="1.05" height="8.46" fill="#c80c0c"/>
<rect x="232.37" y="150.04" width="1.05" height="8.22" fill="#c80c0c"/>
<rect x="233.82" y="153.39" width="1.05" height="5.76" fill="#1fd01f"/>
<rect x="235.28" y="150.75" width="1.05" height="6.32" fill="#1fd01f"/>
<rect x="236.73" y="148.75" width="1.05" height="6.97" fill="#1fd01f"/>
<rect x="238.19" y="149.93" width="1.05" height="7.64" fill="#c80c0c"/>
<rect x="239.65" y="148.50" width="1.05" height="9.89" fill="#1fd01f"/>
<rect x="241.10" y="145.90" width="1.05" height="9.18" fill="#1fd01f"/>
<rect x="242.56" y="143.04" width="1.05" height="15.60" fill="#c80c0c"/>
<rect x="244.01" y="146.43" width="1.05" height="15.33" fill="#c80c0c"/>
<rect x="245.47" y="145.70" width="1.05" height="14.60" fill="#1fd01f"/>
<rect x="246.93" y="145.83" width="1.05" height="11.01" fill="#1fd01f"/>
<rect x="248.38" y="147.23" width="1.05" height="6.30" fill="#c80c0c"/>
<rect x="249.84" y="148.97" width="1.05" height="8.62" fill="#c80c0c"/>
<rect x="251.29" y="148.99" width="1.05" height="8.51" fill="#1fd01f"/>
<rect x="252.75" y="149.23" width="1.05" height="5.80" fill="#c80c0c"/>
<rect x="254.21" y="147.03" width="1.05" height="8.16" fill="#c80c0c"/>
<rect x="255.66" y="146.44" width="1.05" height="9.75" fill="#1fd01f"/>
<rect x="257.12" y="145.03" width="1.05" height="6.27" fill="#1fd01f"/>
<rect x="258.57" y="142.97" width="1.05" height="8.53" fill="#c80c0c"/>
<rect x="260.03" y="145.48" width="1.05" height="4.62" fill="#1fd01f"/>
<rect x="261.49" y="145.46" width="1.05" height="4.29" fill="#1fd01f"/>
<rect x="262.94" y="145.53" width="1.05" height="8.41" fill="#c80c0c"/>
<rect x="264.40" y="148.95" width="1.05" height="5.09" fill="#c80c0c"/>
<rect x="265.85" y="151.60" width="1.05" height="3.48" fill="#c80c0c"/>
<rect x="267.31" y="150.11" width="1.05" height="5.47" fill="#1fd01f"/>
<rect x="268.77" y="151.26" width="1.05" height="5.13" fill="#c80c0c"/>
<rect x="270.22" y="153.28" width="1.05" height="14.77" fill="#c80c0c"/>
<rect x="271.68" y="152.80" width="1.05" height="12.67" fill="#c80c0c"/>
<rect x="273.13" y="158.55" width="1.05" height="6.13" fill="#1fd01f"/>
<rect x="274.59" y="157.46" width="1.05" height="10.24" fill="#c80c0c"/>
<rect x="276.05" y="158.49" width="1.05" height="7.30" fill="#1fd01f"/>
<rect x="277.50" y="155.53" width="1.05" height="9.09" fill="#1fd01f"/>
<rect x="278.96" y="155.54" width="1.05" height="4.84" fill="#1fd01f"/>
<rect x="280.41" y="154.29" width="1.05" height="7.07" fill="#c80c0c"/>
<rect x="281.87" y="154.48" width="1.05" height="8.84" fill="#c80c0c"/>
<rect x="283.33" y="160.09" width="1.05" height="5.35" fill="#c80c0c"/>
<rect x="284.78" y="160.06" width="1.05" height="6.47" fill="#c80c0c"/>
<rect x="286.24" y="160.59" width="1.05" height="6.63" fill="#c80c0c"/>
<rect x="287.69" y="156.71" width="1.05" height="11.37" fill="#1fd01f"/>
<rect x="289.15" y="153.97" width="1.05" height="9.43" fill="#c80c0c"/>
<rect x="290.61" y="154.52" width="1.05" height="6.58" fill="#1fd01f"/>
<rect x="292.06" y="154.24" width="1.05" height="5.93" fill="#1fd01f"/>
<rect x="293.52" y="154.85" width="1.05" height="2.84" fill="#c80c0c"/>
<rect x="294.97" y="155.00" width="1.05" height="5.26" fill="#c80c0c"/>
<rect x="296.43" y="150.26" width="1.05" height="8.31" fill="#1fd01f"/>
<rect x="297.89" y="148.21" width="1.05" height="11.17" fill="#1fd01f"/>
<rect x="299.34" y="147.33" width="1.05" height="9.67" fill="#c80c0c"/>
<rect x="300.80" y="150.97" width="1.05" height="6.11" fill="#c80c0c"/>
<rect x="302.25" y="151.53" width="1.05" height="4.44" fill="#1fd01f"/>
<rect x="303.71" y="150.17" width="1.05" height="8.86" fill="#1fd01f"/>
<rect x="305.17" y="148.35" width="1.05" height="8.50" fill="#c80c0c"/>
<rect x="306.62" y="150.47" width="1.05" height="5.10" fill="#1fd01f"/>
<rect x="308.08" y="150.84" width="1.05" height="9.56" fill="#c80c0c"/>
<rect x="309.53" y="155.17" width="1.05" height="5.57" fill="#1fd01f"/>
<rect x="310.99" y="155.05" width="1.05" height="5.47" fill="#c80c0c"/>
<rect x="312.45" y="152.77" width="1.05" height="7.75" fill="#1fd01f"/>
<rect x="313.90" y="151.97" width="1.05" height="6.48" fill="#1fd01f"/>
<rect x="315.36" y="150.75" width="1.05" height="5.80" fill="#1fd01f"/>
<rect x="316.81" y="152.03" width="1.05" height="5.12" fill="#c80c0c"/>
<rect x="318.27" y="150.39" width="1.05" height="8.87" fill="#1fd01f"/>
<rect x="319.73" y="152.16" width="1.05" height="7.21" fill="#c80c0c"/>
<rect x="321.18" y="153.63" width="1.05" height="7.62" fill="#1fd01f"/>
<rect x="322.64" y="152.54" width="1.05" height="6.87" fill="#1fd01f"/>
<rect x="324.10" y="151.21" width="1.05" height="6.95" fill="#c80c0c"/>
<rect x="325.55" y="151.38" width="1.05" height="6.76" fill="#c80c0c"/>
<rect x="327.01" y="151.62" width="1.05" height="7.30" fill="#c80c0c"/>
<rect x="328.46" y="152.34" width="1.05" height="6.25" fill="#1fd01f"/>
<rect x="329.92" y="152.91" width="1.05" height="6.68" fill="#c80c0c"/>
<rect x="331.38" y="151.44" width="1.05" height="8.82" fill="#c80c0c"/>
<rect x="332.83" y="151.26" width="1.05" height="8.65" fill="#c80c0c"/>
<rect x="334.29" y="158.50" width="1.05" height="4.59" fill="#c80c0c"/>
<rect x="335.74" y="155.62" width="1.05" height="6.65" fill="#1fd01f"/>
<rect x="337.20" y="155.18" width="1.05" height="4.89" fill="#c80c0c"/>
<rect x="338.66" y="155.20" width="1.05" height="6.11" fill="#c80c0c"/>
<rect x="340.11" y="157.73" width="1.05" height="5.40" fill="#1fd01f"/>
<rect x="341.57" y="156.19" width="1.05" height="4.60" fill="#1fd01f"/>
<rect x="343.02" y="149.72" width="1.05" height="13.45" fill="#c80c0c"/>
<rect x="344.48" y="151.91" width="1.05" height="12.75" fill="#1fd01f"/>
<rect x="345.94" y="149.61" width="1.05" height="9.72" fill="#1fd01f"/>
<rect x="347.39" y="142.45" width="1.05" height="12.67" fill="#1fd01f"/>
<rect x="348.85" y="141.29" width="1.05" height="7.30" fill="#1fd01f"/>
<rect x="350.30" y="141.64" width="1.05" height="7.06" fill="#c80c0c"/>
<rect x="351.76" y="143.85" width="1.05" height="7.95" fill="#c80c0c"/>
<rect x="353.22" y="148.63" width="1.05" height="3.62" fill="#c80c0c"/>
<rect x="354.67" y="150.13" width="1.05" height="4.98" fill="#c80c0c"/>
<rect x="356.13" y="148.74" width="1.05" height="13.25" fill="#1fd01f"/>
<rect x="357.58" y="151.07" width="1.05" height="21.40" fill="#c80c0c"/>
<rect x="359.04" y="165.89" width="1.05" height="17.93" fill="#c80c0c"/>
<rect x="360.50" y="175.93" width="1.05" height="8.68" fill="#c80c0c"/>
<rect x="361.95" y="175.93" width="1.05" height="9.79" fill="#1fd01f"/>
<rect x="363.41" y="176.93" width="1.05" height="6.24" fill="#c80c0c"/>
<rect x="364.86" y="178.47" width="1.05" height="7.38" fill="#c80c0c"/>
<rect x="366.32" y="177.19" width="1.05" height="9.62" fill="#1fd01f"/>
<rect x="367.78" y="177.84" width="1.05" height="4.60" fill="#c80c0c"/>
<rect x="369.23" y="179.05" width="1.05" height="5.95" fill="#c80c0c"/>
<rect x="370.69" y="177.14" width="1.05" height="6.73" fill="#1fd01f"/>
<rect x="372.14" y="176.10" width="1.05" height="8.89" fill="#1fd01f"/>
<rect x="373.60" y="173.90" width="1.05" height="13.89" fill="#1fd01f"/>
<rect x="375.06" y="173.24" width="1.05" height="19.30" fill="#c80c0c"/>
<rect x="376.51" y="183.56" width="1.05" height="9.06" fill="#1fd01f"/>
<rect x="377.97" y="185.70" width="1.05" height="5.82" fill="#1fd01f"/>
<rect x="379.42" y="185.91" width="1.05" height="4.04" fill="#1fd01f"/>
<rect x="380.88" y="185.10" width="1.05" height="5.34" fill="#c80c0c"/>
<rect x="382.34" y="185.44" width="1.05" height="5.66" fill="#1fd01f"/>
<rect x="383.79" y="185.04" width="1.05" height="6.39" fill="#1fd01f"/>
<rect x="385.25" y="185.01" width="1.05" height="9.03" fill="#c80c0c"/>
<rect x="386.70" y="190.15" width="1.05" height="3.58" fill="#1fd01f"/>
<rect x="388.16" y="188.21" width="1.05" height="10.60" fill="#c80c0c"/>
<rect x="389.62" y="194.05" width="1.05" height="5.28" fill="#c80c0c"/>
<rect x="391.07" y="195.18" width="1.05" height="8.05" fill="#c80c0c"/>
<rect x="392.53" y="196.03" width="1.05" height="7.07" fill="#1fd01f"/>
<rect x="393.98" y="193.94" width="1.05" height="5.99" fill="#1fd01f"/>
<rect x="395.44" y="193.42" width="1.05" height="6.23" fill="#c80c0c"/>
<rect x="396.90" y="194.19" width="1.05" height="4.25" fill="#1fd01f"/>
<rect x="398.35" y="194.48" width="1.05" height="3.06" fill="#1fd01f"/>
<rect x="399.81" y="193.29" width="1.05" height="4.66" fill="#1fd01f"/>
<rect x="401.26" y="191.60" width="1.05" height="5.40" fill="#c80c0c"/>
<rect x="402.72" y="192.91" width="1.05" height="6.63" fill="#c80c0c"/>
<rect x="404.18" y="193.18" width="1.05" height="7.08" fill="#c80c0c"/>
<rect x="405.63" y="190.47" width="1.05" height="9.97" fill="#1fd01f"/>
<rect x="407.09" y="188.57" width="1.05" height="9.60" fill="#c80c0c"/>
<rect x="408.54" y="193.07" width="1.05" height="8.23" fill="#1fd01f"/>
<rect x="410.00" y="193.96" width="1.05" height="7.44" fill="#c80c0c"/>
<rect x="411.46" y="195.19" width="1.05" height="7.46" fill="#1fd01f"/>
<rect x="412.91" y="194.99" width="1.05" height="6.87" fill="#c80c0c"/>
<rect x="414.37" y="195.69" width="1.05" height="5.83" fill="#1fd01f"/>
<rect x="415.82" y="193.74" width="1.05" height="14.08" fill="#c80c0c"/>
<rect x="417.28" y="199.33" width="1.05" height="8.48" fill="#1fd01f"/>
<rect x="418.74" y="199.73" width="1.05" height="13.94" fill="#c80c0c"/>
<rect x="420.19" y="206.33" width="1.05" height="5.58" fill="#1fd01f"/>
<rect x="421.65" y="207.49" width="1.05" height="4.18" fill="#c80c0c"/>
<rect x="423.10" y="206.17" width="1.05" height="7.91" fill="#c80c0c"/>
<rect x="424.56" y="210.15" width="1.05" height="6.36" fill="#c80c0c"/>
<rect x="426.02" y="210.53" width="1.05" height="7.08" fill="#1fd01f"/>
<rect x="427.47" y="206.87" width="1.05" height="7.26" fill="#1fd01f"/>
<rect x="428.93" y="208.20" width="1.05" height="9.48" fill="#c80c0c"/>
<rect x="430.38" y="212.96" width="1.05" height="4.09" fill="#1fd01f"/>
<rect x="431.84" y="211.45" width="1.05" height="9.26" fill="#c80c0c"/>
<rect x="433.30" y="216.66" width="1.05" height="6.06" fill="#c80c0c"/>
<rect x="434.75" y="218.90" width="1.05" height="4.45" fill="#c80c0c"/>
<rect x="436.21" y="217.76" width="1.05" height="5.59" fill="#c80c0c"/>
<rect x="437.66" y="217.56" width="1.05" height="8.05" fill="#1fd01f"/>
<rect x="439.12" y="218.10" width="1.05" height="10.15" fill="#c80c0c"/>
<rect x="440.58" y="222.60" width="1.05" height="5.08" fill="#1fd01f"/>
<rect x="442.03" y="218.41" width="1.05" height="9.23" fill="#1fd01f"/>
<rect x="443.49" y="219.51" width="1.05" height="6.30" fill="#c80c0c"/>
<rect x="444.94" y="218.40" width="1.05" height="5.45" fill="#1fd01f"/>
<rect x="446.40" y="215.35" width="1.05" height="7.14" fill="#1fd01f"/>
<rect x="447.86" y="216.16" width="1.05" height="7.58" fill="#1fd01f"/>
<rect x="449.31" y="214.01" width="1.05" height="7.56" fill="#1fd01f"/>
<rect x="450.77" y="214.46" width="1.05" height="8.27" fill="#c80c0c"/>
<rect x="452.22" y="219.53" width="1.05" height="8.47" fill="#c80c0c"/>
<rect x="453.68" y="220.98" width="1.05" height="5.16" fill="#1fd01f"/>
<rect x="455.14" y="220.13" width="1.05" height="9.54" fill="#c80c0c"/>
<rect x="456.59" y="221.46" width="1.05" height="15.20" fill="#c80c0c"/>
<rect x="458.05" y="233.53" width="1.05" height="5.50" fill="#1fd01f"/>
<rect x="459.50" y="228.66" width="1.05" height="9.11" fill="#1fd01f"/>
<rect x="460.96" y="228.66" width="1.05" height="8.17" fill="#1fd01f"/>
<rect x="462.42" y="223.36" width="1.05" height="9.14" fill="#1fd01f"/>
<rect x="463.87" y="216.00" width="1.05" height="9.37" fill="#1fd01f"/>
<rect x="465.33" y="213.52" width="1.05" height="7.50" fill="#c80c0c"/>
<rect x="466.78" y="208.70" width="1.05" height="11.85" fill="#1fd01f"/>
<rect x="468.24" y="205.34" width="1.05" height="11.23" fill="#1fd01f"/>
<rect x="469.70" y="204.78" width="1.05" height="8.91" fill="#c80c0c"/>
<rect x="471.15" y="206.01" width="1.05" height="8.94" fill="#c80c0c"/>
<rect x="472.61" y="206.80" width="1.05" height="7.79" fill="#1fd01f"/>
<rect x="474.06" y="206.63" width="1.05" height="10.92" fill="#c80c0c"/>
<rect x="475.52" y="212.55" width="1.05" height="3.86" fill="#c80c0c"/>
<rect x="476.98" y="213.05" width="1.05" height="5.88" fill="#c80c0c"/>
<rect x="478.43" y="210.38" width="1.05" height="10.95" fill="#c80c0c"/>
<rect x="479.89" y="207.66" width="1.05" height="13.33" fill="#1fd01f"/>
<rect x="481.34" y="207.68" width="1.05" height="7.44" fill="#1fd01f"/>
<rect x="482.80" y="207.60" width="1.05" height="7.51" fill="#c80c0c"/>
<rect x="484.26" y="212.37" width="1.05" height="6.17" fill="#c80c0c"/>
<rect x="485.71" y="211.19" width="1.05" height="7.33" fill="#1fd01f"/>
<rect x="487.17" y="211.92" width="1.05" height="6.08" fill="#c80c0c"/>
<rect x="488.62" y="214.49" width="1.05" height="5.30" fill="#c80c0c"/>
<rect x="490.08" y="212.14" width="1.05" height="7.29" fill="#1fd01f"/>
<rect x="491.54" y="210.10" width="1.05" height="6.71" fill="#1fd01f"/>
<rect x="492.99" y="206.85" width="1.05" height="6.30" fill="#1fd01f"/>
<rect x="494.45" y="205.59" width="1.05" height="6.16" fill="#c80c0c"/>
<rect x="495.90" y="198.74" width="1.05" height="11.07" fill="#1fd01f"/>
<rect x="497.36" y="201.02" width="1.05" height="6.74" fill="#c80c0c"/>
<rect x="498.82" y="200.68" width="1.05" height="10.21" fill="#c80c0c"/>
<rect x="500.27" y="205.87" width="1.05" height="7.58" fill="#c80c0c"/>
<rect x="501.73" y="208.36" width="1.05" height="8.20" fill="#c80c0c"/>
<rect x="503.18" y="208.58" width="1.05" height="7.35" fill="#1fd01f"/>
<rect x="504.64" y="209.06" width="1.05" height="10.00" fill="#c80c0c"/>
<rect x="506.10" y="212.31" width="1.05" height="10.36" fill="#c80c0c"/>
<rect x="507.55" y="209.80" width="1.05" height="13.70" fill="#c80c0c"/>
<rect x="509.01" y="213.44" width="1.05" height="8.76" fill="#c80c0c"/>
<rect x="510.46" y="213.06" width="1.05" height="9.13" fill="#1fd01f"/>
<rect x="511.92" y="213.24" width="1.05" height="11.30" fill="#c80c0c"/>
<rect x="513.38" y="218.73" width="1.05" height="6.26" fill="#1fd01f"/>
<rect x="514.83" y="216.79" width="1.05" height="10.81" fill="#c80c0c"/>
<rect x="516.29" y="224.41" width="1.05" height="6.00" fill="#1fd01f"/>
<rect x="517.74" y="225.36" width="1.05" height="8.44" fill="#c80c0c"/>
<rect x="519.20" y="227.86" width="1.05" height="5.62" fill="#1fd01f"/>
<rect x="520.66" y="228.08" width="1.05" height="6.10" fill="#c80c0c"/>
<rect x="522.11" y="227.99" width="1.05" height="6.22" fill="#c80c0c"/>
<rect x="523.57" y="228.10" width="1.05" height="6.05" fill="#1fd01f"/>
<rect x="525.02" y="225.41" width="1.05" height="6.85" fill="#1fd01f"/>
<rect x="526.48" y="225.59" width="1.05" height="5.52" fill="#1fd01f"/>
<rect x="527.94" y="225.12" width="1.05" height="5.99" fill="#c80c0c"/>
<rect x="529.39" y="228.05" width="1.05" height="3.91" fill="#c80c0c"/>
<rect x="530.85" y="229.41" width="1.05" height="8.31" fill="#c80c0c"/>
<rect x="532.30" y="232.26" width="1.05" height="8.85" fill="#c80c0c"/>
<rect x="533.76" y="230.91" width="1.05" height="12.39" fill="#1fd01f"/>
<rect x="535.22" y="229.36" width="1.05" height="3.73" fill="#1fd01f"/>
<rect x="536.67" y="229.65" width="1.05" height="7.00" fill="#c80c0c"/>
<rect x="538.13" y="229.14" width="1.05" height="8.82" fill="#1fd01f"/>
<rect x="539.58" y="229.44" width="1.05" height="6.24" fill="#c80c0c"/>
<rect x="541.04" y="231.72" width="1.05" height="6.24" fill="#c80c0c"/>
<rect x="542.50" y="235.39" width="1.05" height="3.64" fill="#1fd01f"/>
<rect x="543.95" y="234.51" width="1.05" height="6.17" fill="#c80c0c"/>
<rect x="545.41" y="230.35" width="1.05" height="12.77" fill="#1fd01f"/>
<rect x="546.86" y="232.32" width="1.05" height="6.26" fill="#c80c0c"/>
<rect x="548.32" y="231.00" width="1.05" height="8.59" fill="#c80c0c"/>
<rect x="549.78" y="231.70" width="1.05" height="18.60" fill="#c80c0c"/>
<rect x="551.23" y="246.58" width="1.05" height="10.02" fill="#c80c0c"/>
<rect x="552.69" y="251.88" width="1.05" height="4.80" fill="#c80c0c"/>
<rect x="554.14" y="250.39" width="1.05" height="6.00" fill="#1fd01f"/>
<rect x="555.60" y="250.47" width="1.05" height="8.15" fill="#c80c0c"/>
<rect x="557.06" y="255.26" width="1.05" height="5.72" fill="#1fd01f"/>
<rect x="558.51" y="253.76" width="1.05" height="8.38" fill="#c80c0c"/>
<rect x="559.97" y="253.68" width="1.05" height="6.76" fill="#1fd01f"/>
<rect x="561.42" y="255.11" width="1.05" height="4.27" fill="#c80c0c"/>
<rect x="562.88" y="252.13" width="1.05" height="7.68" fill="#1fd01f"/>
<rect x="564.34" y="251.40" width="1.05" height="8.34" fill="#c80c0c"/>
<rect x="565.79" y="254.97" width="1.05" height="12.69" fill="#c80c0c"/>
<rect x="567.25" y="259.89" width="1.05" height="15.33" fill="#c80c0c"/>
<rect x="568.70" y="252.00" width="1.05" height="18.10" fill="#1fd01f"/>
<rect x="570.16" y="253.90" width="1.05" height="14.94" fill="#c80c0c"/>
<rect x="571.62" y="258.12" width="1.05" height="12.59" fill="#1fd01f"/>
<rect x="573.07" y="261.80" width="1.05" height="6.94" fill="#1fd01f"/>
<rect x="574.53" y="255.10" width="1.05" height="13.68" fill="#1fd01f"/>
<rect x="575.98" y="251.70" width="1.05" height="8.07" fill="#1fd01f"/>
<rect x="577.44" y="248.39" width="1.05" height="8.72" fill="#1fd01f"/>
<rect x="578.90" y="244.21" width="1.05" height="9.46" fill="#1fd01f"/>
<rect x="580.35" y="244.14" width="1.05" height="5.25" fill="#1fd01f"/>
<rect x="581.81" y="243.10" width="1.05" height="10.55" fill="#c80c0c"/>
<rect x="583.26" y="244.65" width="1.05" height="13.32" fill="#c80c0c"/>
<rect x="584.72" y="246.70" width="1.05" height="14.83" fill="#c80c0c"/>
<rect x="586.18" y="248.95" width="1.05" height="11.92" fill="#c80c0c"/>
<rect x="587.63" y="250.23" width="1.05" height="13.28" fill="#c80c0c"/>
<rect x="589.09" y="257.47" width="1.05" height="7.10" fill="#c80c0c"/>
<rect x="590.54" y="259.75" width="1.05" height="6.41" fill="#c80c0c"/>
<rect x="592.00" y="256.94" width="1.05" height="8.86" fill="#1fd01f"/>
<rect x="593.46" y="253.43" width="1.05" height="11.15" fill="#1fd01f"/>
<rect x="594.91" y="251.38" width="1.05" height="7.68" fill="#1fd01f"/>
<rect x="596.37" y="249.95" width="1.05" height="10.59" fill="#c80c0c"/>
<rect x="597.82" y="255.11" width="1.05" height="6.61" fill="#1fd01f"/>
<rect x="599.28" y="255.13" width="1.05" height="6.41" fill="#1fd01f"/>
<rect x="600.74" y="250.05" width="1.05" height="9.22" fill="#c80c0c"/>
<rect x="602.19" y="246.12" width="1.05" height="14.47" fill="#1fd01f"/>
<rect x="603.65" y="245.93" width="1.05" height="7.37" fill="#c80c0c"/>
<rect x="605.10" y="241.09" width="1.05" height="11.10" fill="#1fd01f"/>
<rect x="606.56" y="243.20" width="1.05" height="8.32" fill="#c80c0c"/>
<rect x="608.02" y="244.30" width="1.05" height="7.28" fill="#1fd01f"/>
<rect x="609.47" y="244.35" width="1.05" height="9.67" fill="#c80c0c"/>
<rect x="610.93" y="246.59" width="1.05" height="10.68" fill="#c80c0c"/>
<rect x="612.38" y="251.91" width="1.05" height="5.56" fill="#1fd01f"/>
<rect x="613.84" y="253.42" width="1.05" height="3.73" fill="#1fd01f"/>
<rect x="615.30" y="252.47" width="1.05" height="8.62" fill="#c80c0c"/>
<rect x="616.75" y="257.20" width="1.05" height="5.96" fill="#c80c0c"/>
<rect x="618.21" y="260.15" width="1.05" height="4.56" fill="#c80c0c"/>
<rect x="619.66" y="259.74" width="1.05" height="8.47" fill="#c80c0c"/>
<rect x="621.12" y="255.12" width="1.05" height="12.94" fill="#1fd01f"/>
<rect x="622.58" y="255.28" width="1.05" height="8.63" fill="#1fd01f"/>
<rect x="624.03" y="256.65" width="1.05" height="5.18" fill="#c80c0c"/>
<rect x="625.49" y="257.38" width="1.05" height="6.57" fill="#c80c0c"/>
<rect x="626.94" y="260.53" width="1.05" height="4.16" fill="#c80c0c"/>
<rect x="628.40" y="259.80" width="1.05" height="3.58" fill="#1fd01f"/>
<rect x="629.86" y="259.00" width="1.05" height="7.28" fill="#c80c0c"/>
<rect x="631.31" y="258.25" width="1.05" height="6.72" fill="#1fd01f"/>
<rect x="632.77" y="255.51" width="1.05" height="6.35" fill="#c80c0c"/>
<rect x="634.22" y="258.34" width="1.05" height="4.42" fill="#c80c0c"/>
<rect x="635.68" y="257.16" width="1.05" height="8.91" fill="#c80c0c"/>
<rect x="637.14" y="260.86" width="1.05" height="9.38" fill="#c80c0c"/>
<rect x="638.59" y="256.65" width="1.05" height="10.55" fill="#c80c0c"/>
<rect x="640.05" y="253.06" width="1.05" height="15.24" fill="#1fd01f"/>
<rect x="641.50" y="251.08" width="1.05" height="6.32" fill="#c80c0c"/>
<rect x="642.96" y="255.18" width="1.05" height="5.85" fill="#c80c0c"/>
<rect x="644.42" y="257.76" width="1.05" height="5.57" fill="#c80c0c"/>
<rect x="645.87" y="258.83" width="1.05" height="6.87" fill="#1fd01f"/>
<rect x="647.33" y="257.41" width="1.05" height="8.82" fill="#c80c0c"/>
<rect x="648.78" y="262.73" width="1.05" height="7.50" fill="#c80c0c"/>
<rect x="650.24" y="260.59" width="1.05" height="8.43" fill="#1fd01f"/>
<rect x="651.70" y="260.54" width="1.05" height="10.57" fill="#c80c0c"/>
<rect x="653.15" y="264.23" width="1.05" height="7.34" fill="#1fd01f"/>
<rect x="654.61" y="263.94" width="1.05" height="10.80" fill="#c80c0c"/>
<rect x="656.06" y="268.01" width="1.05" height="4.71" fill="#1fd01f"/>
<rect x="657.52" y="267.87" width="1.05" height="10.49" fill="#c80c0c"/>
<rect x="658.98" y="272.73" width="1.05" height="10.18" fill="#c80c0c"/>
<rect x="660.43" y="279.68" width="1.05" height="5.80" fill="#c80c0c"/>
<rect x="661.89" y="278.47" width="1.05" height="7.64" fill="#1fd01f"/>
<rect x="663.34" y="268.56" width="1.05" height="16.11" fill="#1fd01f"/>
<rect x="664.80" y="263.25" width="1.05" height="13.33" fill="#1fd01f"/>
<rect x="666.26" y="266.45" width="1.05" height="10.37" fill="#1fd01f"/>
<rect x="667.71" y="265.76" width="1.05" height="7.09" fill="#1fd01f"/>
<rect x="669.17" y="266.83" width="1.05" height="9.56" fill="#c80c0c"/>
<rect x="670.62" y="267.03" width="1.05" height="9.87" fill="#1fd01f"/>
<rect x="672.08" y="266.63" width="1.05" height="11.03" fill="#c80c0c"/>
<rect x="673.54" y="275.34" width="1.05" height="5.52" fill="#c80c0c"/>
<rect x="674.99" y="278.00" width="1.05" height="4.24" fill="#c80c0c"/>
<rect x="676.45" y="278.79" width="1.05" height="3.09" fill="#1fd01f"/>
<rect x="677.90" y="277.40" width="1.05" height="3.32" fill="#c80c0c"/>
<rect x="679.36" y="273.21" width="1.05" height="8.15" fill="#1fd01f"/>
<rect x="680.82" y="272.97" width="1.05" height="5.82" fill="#c80c0c"/>
<rect x="682.27" y="272.72" width="1.05" height="7.26" fill="#c80c0c"/>
<rect x="683.73" y="272.54" width="1.05" height="7.47" fill="#1fd01f"/>
<rect x="685.18" y="269.73" width="1.05" height="6.50" fill="#1fd01f"/>
<rect x="686.64" y="271.52" width="1.05" height="3.10" fill="#1fd01f"/>
<rect x="688.10" y="271.38" width="1.05" height="7.68" fill="#1fd01f"/>
<rect x="689.55" y="269.49" width="1.05" height="12.90" fill="#c80c0c"/>
<rect x="691.01" y="269.18" width="1.05" height="12.12" fill="#1fd01f"/>
<rect x="692.46" y="269.69" width="1.05" height="7.46" fill="#c80c0c"/>
<rect x="693.92" y="272.76" width="1.05" height="4.26" fill="#1fd01f"/>
<rect x="695.38" y="271.29" width="1.05" height="7.29" fill="#c80c0c"/>
<rect x="696.83" y="269.94" width="1.05" height="7.85" fill="#1fd01f"/>
<rect x="698.29" y="267.59" width="1.05" height="6.71" fill="#c80c0c"/>
<rect x="699.74" y="268.63" width="1.05" height="6.03" fill="#1fd01f"/>
<rect x="701.20" y="270.30" width="1.05" height="4.59" fill="#c80c0c"/>
<rect x="702.66" y="269.43" width="1.05" height="6.65" fill="#c80c0c"/>
<rect x="704.11" y="272.80" width="1.05" height="10.61" fill="#c80c0c"/>
<rect x="705.57" y="277.13" width="1.05" height="7.14" fill="#c80c0c"/>
<rect x="707.02" y="273.14" width="1.05" height="9.42" fill="#1fd01f"/>
<rect x="708.48" y="271.99" width="1.05" height="9.16" fill="#c80c0c"/>
<rect x="709.94" y="266.42" width="1.05" height="13.59" fill="#1fd01f"/>
<rect x="711.39" y="265.95" width="1.05" height="12.90" fill="#c80c0c"/>
<rect x="712.85" y="276.08" width="1.05" height="6.47" fill="#c80c0c"/>
<rect x="714.30" y="278.57" width="1.05" height="8.93" fill="#c80c0c"/>
<rect x="715.76" y="281.93" width="1.05" height="13.61" fill="#c80c0c"/>
<rect x="717.22" y="293.67" width="1.05" height="8.65" fill="#c80c0c"/>
<rect x="718.67" y="297.99" width="1.05" height="6.08" fill="#1fd01f"/>
<rect x="720.13" y="298.23" width="1.05" height="4.79" fill="#c80c0c"/>
<rect x="721.58" y="298.22" width="1.05" height="3.71" fill="#1fd01f"/>
<rect x="723.04" y="297.19" width="1.05" height="6.96" fill="#c80c0c"/>
<rect x="724.50" y="295.80" width="1.05" height="7.50" fill="#1fd01f"/>
<rect x="725.95" y="296.75" width="1.05" height="5.14" fill="#c80c0c"/>
<rect x="727.41" y="294.19" width="1.05" height="8.58" fill="#1fd01f"/>
<rect x="728.86" y="295.36" width="1.05" height="8.46" fill="#c80c0c"/>
<rect x="730.32" y="299.14" width="1.05" height="7.60" fill="#c80c0c"/>
<rect x="731.78" y="301.65" width="1.05" height="7.09" fill="#c80c0c"/>
<rect x="733.23" y="303.47" width="1.05" height="11.66" fill="#c80c0c"/>
<rect x="734.69" y="307.84" width="1.05" height="11.99" fill="#c80c0c"/>
<rect x="736.14" y="313.96" width="1.05" height="14.26" fill="#c80c0c"/>
<rect x="737.60" y="321.03" width="1.05" height="20.54" fill="#c80c0c"/>
<rect x="739.06" y="321.00" width="1.05" height="27.50" fill="#c80c0c"/>
<rect x="740.51" y="323.27" width="1.05" height="13.12" fill="#c80c0c"/>
<rect x="741.97" y="320.08" width="1.05" height="15.46" fill="#1fd01f"/>
<rect x="743.42" y="318.25" width="1.05" height="9.37" fill="#1fd01f"/>
<rect x="744.88" y="317.33" width="1.05" height="11.36" fill="#c80c0c"/>
<rect x="746.34" y="321.24" width="1.05" height="7.33" fill="#1fd01f"/>
<rect x="747.79" y="321.75" width="1.05" height="8.88" fill="#c80c0c"/>
<rect x="749.25" y="319.36" width="1.05" height="10.62" fill="#1fd01f"/>
<rect x="750.70" y="320.07" width="1.05" height="10.78" fill="#c80c0c"/>
<rect x="752.16" y="320.99" width="1.05" height="10.92" fill="#1fd01f"/>
<rect x="753.62" y="316.14" width="1.05" height="9.09" fill="#1fd01f"/>
<rect x="755.07" y="315.46" width="1.05" height="9.44" fill="#c80c0c"/>
<rect x="756.53" y="313.67" width="1.05" height="13.44" fill="#1fd01f"/>
<rect x="757.98" y="312.92" width="1.05" height="7.78" fill="#1fd01f"/>
<rect x="759.44" y="310.63" width="1.05" height="7.87" fill="#1fd01f"/>
<rect x="760.90" y="308.61" width="1.05" height="6.84" fill="#1fd01f"/>
<rect x="762.35" y="307.61" width="1.05" height="5.96" fill="#c80c0c"/>
<rect x="763.81" y="305.40" width="1.05" height="8.68" fill="#1fd01f"/>
<rect x="765.26" y="298.00" width="1.05" height="11.00" fill="#1fd01f"/>
<rect x="766.72" y="297.50" width="1.05" height="5.50" fill="#c80c0c"/>
<rect x="768.18" y="300.00" width="1.05" height="6.00" fill="#c80c0c"/>
<rect x="769.63" y="304.00" width="1.05" height="6.50" fill="#c80c0c"/>
<path d="M775.3 312.2 L829.3 267.9 M832.2 268.8 L853.2 350.7" fill="none" stroke="#c80808" stroke-width="0.95"/>
<path d="M803.7 268 V282.7 H815.4 V268" fill="none" stroke="#c80808" stroke-width="1.3"/>
<path d="M807.3 269.8 v4.6 h-2.4 l3.9 4 l3.9 -4 h-2.4 v-4.6 Z" fill="none" stroke="#c00808" stroke-width="0.9"/>
<circle cx="808.6" cy="268.4" r="1.6" fill="#ffb0a0" opacity="0.8"/><circle cx="808.6" cy="268.5" r="0.9" fill="#ffffff"/>
<text x="6.8" y="366.0" font-size="7.6" fill="#e8e8e8" text-anchor="start" font-weight="normal" textLength="49.6" lengthAdjust="spacingAndGlyphs" >RSI(14) 49.9124</text>
<line x1="4.65" y1="395.6" x2="967" y2="395.6" stroke="#9a9a9a" stroke-width="1.2" stroke-dasharray="2.1 2.25"/>
<line x1="4.65" y1="446.9" x2="967" y2="446.9" stroke="#9a9a9a" stroke-width="1.2" stroke-dasharray="2.1 2.25"/>
<text x="970" y="365" font-size="7.2" fill="#e8e8e8" text-anchor="start" font-weight="normal" textLength="12" lengthAdjust="spacingAndGlyphs" >100</text>
<text x="970" y="398.6" font-size="7.2" fill="#e8e8e8" text-anchor="start" font-weight="normal" textLength="8" lengthAdjust="spacingAndGlyphs" >70</text>
<text x="970" y="449.9" font-size="7.2" fill="#e8e8e8" text-anchor="start" font-weight="normal" textLength="8" lengthAdjust="spacingAndGlyphs" >30</text>
<text x="970" y="483" font-size="7.2" fill="#e8e8e8" text-anchor="start" font-weight="normal" textLength="4" lengthAdjust="spacingAndGlyphs" >0</text>
<rect x="968" y="357.8" width="2" height="1" fill="#c8c8c8"/>
<rect x="725.5" y="460.5" width="29.5" height="14.5" fill="#0000f4"/>
<polyline points="4.2,429.3 5.7,428.3 8.3,438.0 9.8,438.8 12.0,441.8 14.3,442.9 18.0,456.0 21.0,447.0 24.0,443.8 27.3,428.7 31.5,437.3 35.3,446.8 40.2,438.3 43.5,441.8 45.8,451.6 48.0,446.8 50.3,447.0 52.5,429.8 56.8,422.3 60.8,447.8 62.3,431.3 66.0,438.0 71.8,447.8 73.6,435.8 77.3,431.7 78.8,438.3 81.0,437.7 83.3,428.3 87.0,417.0 90.0,422.3 92.3,420.8 95.0,428.3 96.8,424.5 99.8,412.8 102.3,417.0 105.0,423.8 106.8,418.5 109.8,420.8 113.5,434.7 116.5,418.5 118.8,423.8 121.0,432.8 122.8,418.5 125.5,420.0 127.8,417.3 129.3,417.8 132.3,407.3 134.8,405.0 137.2,411.0 139.0,401.3 140.8,405.0 143.2,417.8 144.7,412.5 148.8,414.0 151.0,427.5 153.3,429.8 156.3,435.0 157.8,454.6 160.0,456.8 163.0,447.0 165.8,450.0 168.3,445.6 170.6,444.0 172.8,441.0 174.3,446.3 177.3,439.5 179.6,441.0 181.8,439.5 183.3,444.0 186.3,428.3 188.6,432.0 190.8,440.3 193.8,426.0 196.0,423.8 198.3,426.8 199.8,419.3 203.8,425.3 206.0,421.5 207.5,426.0 209.0,413.3 209.8,423.8 211.3,427.2 214.3,420.0 217.3,417.8 220.3,402.0 222.5,404.3 224.8,409.5 226.7,405.8 230.0,410.3 233.3,422.7 236.0,420.8 238.3,421.8 240.5,419.3 242.3,410.3 244.3,428.3 245.0,417.0 247.3,420.0 248.8,417.8 251.8,422.3 254.0,417.0 257.0,415.8 260.0,408.8 264.6,425.3 268.3,422.3 270.6,435.0 272.0,432.0 274.3,433.5 276.6,437.3 279.6,426.3 282.6,433.5 285.3,432.8 287.8,429.8 289.8,413.3 291.6,419.3 293.8,414.8 295.3,422.3 296.8,412.5 299.8,423.8 303.8,416.3 305.7,421.5 307.5,419.7 311.3,423.0 313.2,414.8 315.8,417.0 318.8,411.0 321.8,426.0 323.3,416.3 326.3,414.8 327.8,420.8 331.5,419.3 333.8,426.8 336.8,428.3 339.3,430.5 343.5,414.8 345.0,417.0 348.3,400.5 351.0,408.0 353.3,411.0 356.3,420.8 357.8,442.6 359.6,453.8 362.3,446.3 365.3,446.3 367.3,444.8 369.8,448.3 372.0,434.3 375.8,444.0 379.6,446.3 382.6,448.6 384.8,443.3 387.0,450.0 391.6,456.8 394.6,436.5 396.8,438.8 399.8,434.3 404.5,434.3 406.3,429.3 407.8,440.3 409.3,428.7 414.3,436.5 416.5,439.5 418.3,450.4 419.5,443.3 422.5,442.6 424.3,447.0 427.0,437.7 429.3,443.3 431.8,446.3 434.5,444.4 439.0,451.6 441.3,450.8 443.5,436.5 445.0,437.3 447.7,429.8 451.8,438.8 455.6,444.8 459.8,455.3 463.0,420.8 464.6,417.0 466.4,415.5 468.3,405.0 470.9,411.8 473.6,411.0 478.0,424.2 482.6,413.3 484.8,420.8 487.8,417.8 490.8,420.0 493.0,410.3 496.0,402.8 499.8,417.0 501.8,414.8 504.8,428.3 507.5,421.5 510.5,430.5 514.3,432.8 517.7,445.6 521.0,441.8 525.5,430.5 528.5,430.5 532.3,444.0 535.3,439.5 538.7,428.3 542.0,437.7 545.0,438.8 548.3,426.3 550.8,449.8 554.0,451.6 557.4,456.0 560.8,441.8 563.8,447.0 566.8,454.9 569.4,431.7 572.0,441.8 575.8,423.8 580.8,415.5 585.6,428.3 588.6,430.5 591.3,435.0 594.3,420.0 596.8,426.0 599.8,420.8 601.5,414.0 604.5,411.8 607.5,410.3 609.3,420.8 611.7,423.8 614.7,433.5 616.8,433.5 617.7,428.3 618.8,438.8 621.0,424.8 626.3,431.3 629.3,423.8 632.3,428.7 634.5,427.5 636.3,435.0 639.3,420.0 642.3,422.3 644.3,429.0 645.8,424.8 649.5,437.3 651.8,426.0 656.3,437.3 659.3,447.0 662.3,445.6 664.6,423.8 666.4,427.5 668.8,420.8 672.8,434.3 675.8,437.3 680.8,418.5 683.3,429.3 687.1,421.5 690.4,428.3 692.5,420.4 696.4,417.0 699.3,417.9 702.7,423.8 705.5,433.6 708.2,416.7 711.1,425.5 714.5,430.5 718.7,450.8 722.1,447.4 725.8,439.8 728.5,444.0 730.5,445.7 739.0,466.9 740.7,445.7 743.2,440.7 746.1,447.1 748.3,441.5 753.9,433.1 755.0,422.1 759.3,416.2 760.9,421.3 766.9,406.0 769.4,410.3 771.9,420.4" fill="none" stroke="#2172d2" stroke-width="1.05" stroke-linejoin="round"/>
<rect x="3.2" y="485.5" width="1" height="2" fill="#c8c8c8"/>
<text x="2.9000000000000004" y="494.2" font-size="7.7" fill="#e8e8e8" text-anchor="start" font-weight="normal" textLength="37.8" lengthAdjust="spacingAndGlyphs" >20 Apr 2018</text>
<rect x="50.4" y="485.5" width="1" height="2" fill="#c8c8c8"/>
<text x="50.1" y="494.2" font-size="7.7" fill="#e8e8e8" text-anchor="start" font-weight="normal" textLength="39.8" lengthAdjust="spacingAndGlyphs" >27 Apr 09:00</text>
<rect x="97.3" y="485.5" width="1" height="2" fill="#c8c8c8"/>
<text x="97.0" y="494.2" font-size="7.7" fill="#e8e8e8" text-anchor="start" font-weight="normal" textLength="38.6" lengthAdjust="spacingAndGlyphs" >4 May 17:00</text>
<rect x="144.5" y="485.5" width="1" height="2" fill="#c8c8c8"/>
<text x="144.2" y="494.2" font-size="7.7" fill="#e8e8e8" text-anchor="start" font-weight="normal" textLength="42.5" lengthAdjust="spacingAndGlyphs" >14 May 01:00</text>
<rect x="191.2" y="485.5" width="1" height="2" fill="#c8c8c8"/>
<text x="190.89999999999998" y="494.2" font-size="7.7" fill="#e8e8e8" text-anchor="start" font-weight="normal" textLength="42.5" lengthAdjust="spacingAndGlyphs" >21 May 09:00</text>
<rect x="238" y="485.5" width="1" height="2" fill="#c8c8c8"/>
<text x="237.7" y="494.2" font-size="7.7" fill="#e8e8e8" text-anchor="start" font-weight="normal" textLength="42.5" lengthAdjust="spacingAndGlyphs" >28 May 17:00</text>
<rect x="284.8" y="485.5" width="1" height="2" fill="#c8c8c8"/>
<text x="284.5" y="494.2" font-size="7.7" fill="#e8e8e8" text-anchor="start" font-weight="normal" textLength="36.6" lengthAdjust="spacingAndGlyphs" >5 Jun 05:00</text>
<rect x="331.6" y="485.5" width="1" height="2" fill="#c8c8c8"/>
<text x="331.3" y="494.2" font-size="7.7" fill="#e8e8e8" text-anchor="start" font-weight="normal" textLength="40.5" lengthAdjust="spacingAndGlyphs" >12 Jun 13:00</text>
<rect x="378.4" y="485.5" width="1" height="2" fill="#c8c8c8"/>
<text x="378.09999999999997" y="494.2" font-size="7.7" fill="#e8e8e8" text-anchor="start" font-weight="normal" textLength="40.5" lengthAdjust="spacingAndGlyphs" >19 Jun 21:00</text>
<rect x="425.2" y="485.5" width="1" height="2" fill="#c8c8c8"/>
<text x="424.9" y="494.2" font-size="7.7" fill="#e8e8e8" text-anchor="start" font-weight="normal" textLength="40.5" lengthAdjust="spacingAndGlyphs" >27 Jun 05:00</text>
<rect x="472" y="485.5" width="1" height="2" fill="#c8c8c8"/>
<text x="471.7" y="494.2" font-size="7.7" fill="#e8e8e8" text-anchor="start" font-weight="normal" textLength="34.3" lengthAdjust="spacingAndGlyphs" >4 Jul 13:00</text>
<rect x="518.8" y="485.5" width="1" height="2" fill="#c8c8c8"/>
<text x="518.5" y="494.2" font-size="7.7" fill="#e8e8e8" text-anchor="start" font-weight="normal" textLength="38.2" lengthAdjust="spacingAndGlyphs" >12 Jul 01:00</text>
<rect x="565.6" y="485.5" width="1" height="2" fill="#c8c8c8"/>
<text x="565.3000000000001" y="494.2" font-size="7.7" fill="#e8e8e8" text-anchor="start" font-weight="normal" textLength="38.2" lengthAdjust="spacingAndGlyphs" >19 Jul 09:00</text>
<rect x="612.4" y="485.5" width="1" height="2" fill="#c8c8c8"/>
<text x="612.1" y="494.2" font-size="7.7" fill="#e8e8e8" text-anchor="start" font-weight="normal" textLength="38.2" lengthAdjust="spacingAndGlyphs" >26 Jul 17:00</text>
<rect x="659.2" y="485.5" width="1" height="2" fill="#c8c8c8"/>
<text x="658.9000000000001" y="494.2" font-size="7.7" fill="#e8e8e8" text-anchor="start" font-weight="normal" textLength="37.4" lengthAdjust="spacingAndGlyphs" >3 Aug 01:00</text>
<rect x="706" y="485.5" width="1" height="2" fill="#c8c8c8"/>
<text x="705.7" y="494.2" font-size="7.7" fill="#e8e8e8" text-anchor="start" font-weight="normal" textLength="41.3" lengthAdjust="spacingAndGlyphs" >10 Aug 09:00</text>
<rect x="752.8" y="485.5" width="1" height="2" fill="#c8c8c8"/>
<text x="752.5" y="494.2" font-size="7.7" fill="#e8e8e8" text-anchor="start" font-weight="normal" textLength="41.3" lengthAdjust="spacingAndGlyphs" >17 Aug 17:00</text>
<rect x="0" y="499.7" width="1000" height="17" fill="#ececec"/>
<rect x="0" y="499.7" width="1000" height="1.1" fill="#e2e2e2"/>
<rect x="0" y="500.9" width="1000" height="1.4" fill="#8e8e8e"/>
<rect x="0" y="515.5" width="1000" height="1.3" fill="#f8f8f8"/>
<rect x="0" y="496" width="1.5" height="19.5" fill="#a4a4a4"/>
<rect x="998.3" y="496" width="1.7" height="19.5" fill="#e6e6e6"/>
<rect x="66.5" y="499.6" width="51.8" height="15.2" fill="#ffffff"/>
<rect x="66" y="501" width="1.2" height="14.6" fill="#5a5a5a"/>
<rect x="117.8" y="501" width="1.2" height="14.6" fill="#5a5a5a"/>
<rect x="66" y="514.4" width="53" height="1.2" fill="#5a5a5a"/>
<text x="12.8" y="511.6" font-size="9.5" fill="#7a7a7a" text-anchor="start" font-weight="normal" textLength="44" lengthAdjust="spacingAndGlyphs" >EURUSD,H4</text>
<text x="74.4" y="511.6" font-size="9.5" fill="#1e1e1e" text-anchor="start" font-weight="normal" textLength="35.2" lengthAdjust="spacingAndGlyphs" stroke="#1e1e1e" stroke-width="0.2">GOLD,H4</text>
<path d="M979.4 505.8 v4.8 l-3.2 -2.4 Z" fill="#9a9a9a"/><path d="M990.2 505.8 v4.8 l3.2 -2.4 Z" fill="#9a9a9a"/>
<rect x="0" y="516.8" width="1000" height="16.2" fill="#f0f0f0"/>
<text x="1.5" y="528.7" font-size="9.8" fill="#1e1e1e" text-anchor="start" font-weight="normal" textLength="66.5" lengthAdjust="spacingAndGlyphs" stroke="#1e1e1e" stroke-width="0.25">For Help, press F1</text>
<rect x="492.5" y="518" width="0.9" height="15" fill="#c6c6c6"/>
<rect x="577.5" y="518" width="0.9" height="15" fill="#c6c6c6"/>
<rect x="651.6" y="518" width="0.9" height="15" fill="#c6c6c6"/>
<rect x="703.6" y="518" width="0.9" height="15" fill="#c6c6c6"/>
<rect x="755.6" y="518" width="0.9" height="15" fill="#c6c6c6"/>
<rect x="805" y="518" width="0.9" height="15" fill="#c6c6c6"/>
<rect x="856.5" y="518" width="0.9" height="15" fill="#c6c6c6"/>
<rect x="905.1" y="518" width="0.9" height="15" fill="#c6c6c6"/>
<text x="496" y="528.7" font-size="9.8" fill="#1e1e1e" text-anchor="start" font-weight="normal" textLength="28" lengthAdjust="spacingAndGlyphs" stroke="#1e1e1e" stroke-width="0.25">Default</text>
<rect x="909.20" y="520.1" width="1.5" height="7.30" fill="#7a9a2a"/>
<rect x="909.20" y="527.40" width="1.5" height="2.20" fill="#22577e"/>
<rect x="911.45" y="520.1" width="1.5" height="6.25" fill="#7a9a2a"/>
<rect x="911.45" y="526.35" width="1.5" height="3.25" fill="#22577e"/>
<rect x="913.70" y="520.1" width="1.5" height="5.20" fill="#7a9a2a"/>
<rect x="913.70" y="525.30" width="1.5" height="4.30" fill="#22577e"/>
<rect x="915.95" y="520.1" width="1.5" height="4.15" fill="#7a9a2a"/>
<rect x="915.95" y="524.25" width="1.5" height="5.35" fill="#22577e"/>
<rect x="918.20" y="520.1" width="1.5" height="3.10" fill="#7a9a2a"/>
<rect x="918.20" y="523.20" width="1.5" height="6.40" fill="#22577e"/>
<rect x="920.45" y="520.1" width="1.5" height="2.05" fill="#7a9a2a"/>
<rect x="920.45" y="522.15" width="1.5" height="7.45" fill="#22577e"/>
<rect x="922.70" y="520.1" width="1.5" height="1.00" fill="#7a9a2a"/>
<rect x="922.70" y="521.10" width="1.5" height="8.50" fill="#22577e"/>
<rect x="924.95" y="520.1" width="1.5" height="-0.05" fill="#7a9a2a"/>
<rect x="924.95" y="520.05" width="1.5" height="9.55" fill="#22577e"/>
<text x="928.7" y="528.8" font-size="9.8" fill="#1e1e1e" text-anchor="start" font-weight="normal" textLength="32.5" lengthAdjust="spacingAndGlyphs" stroke="#1e1e1e" stroke-width="0.25">199/2 kb</text>
</svg>
</body></html>
